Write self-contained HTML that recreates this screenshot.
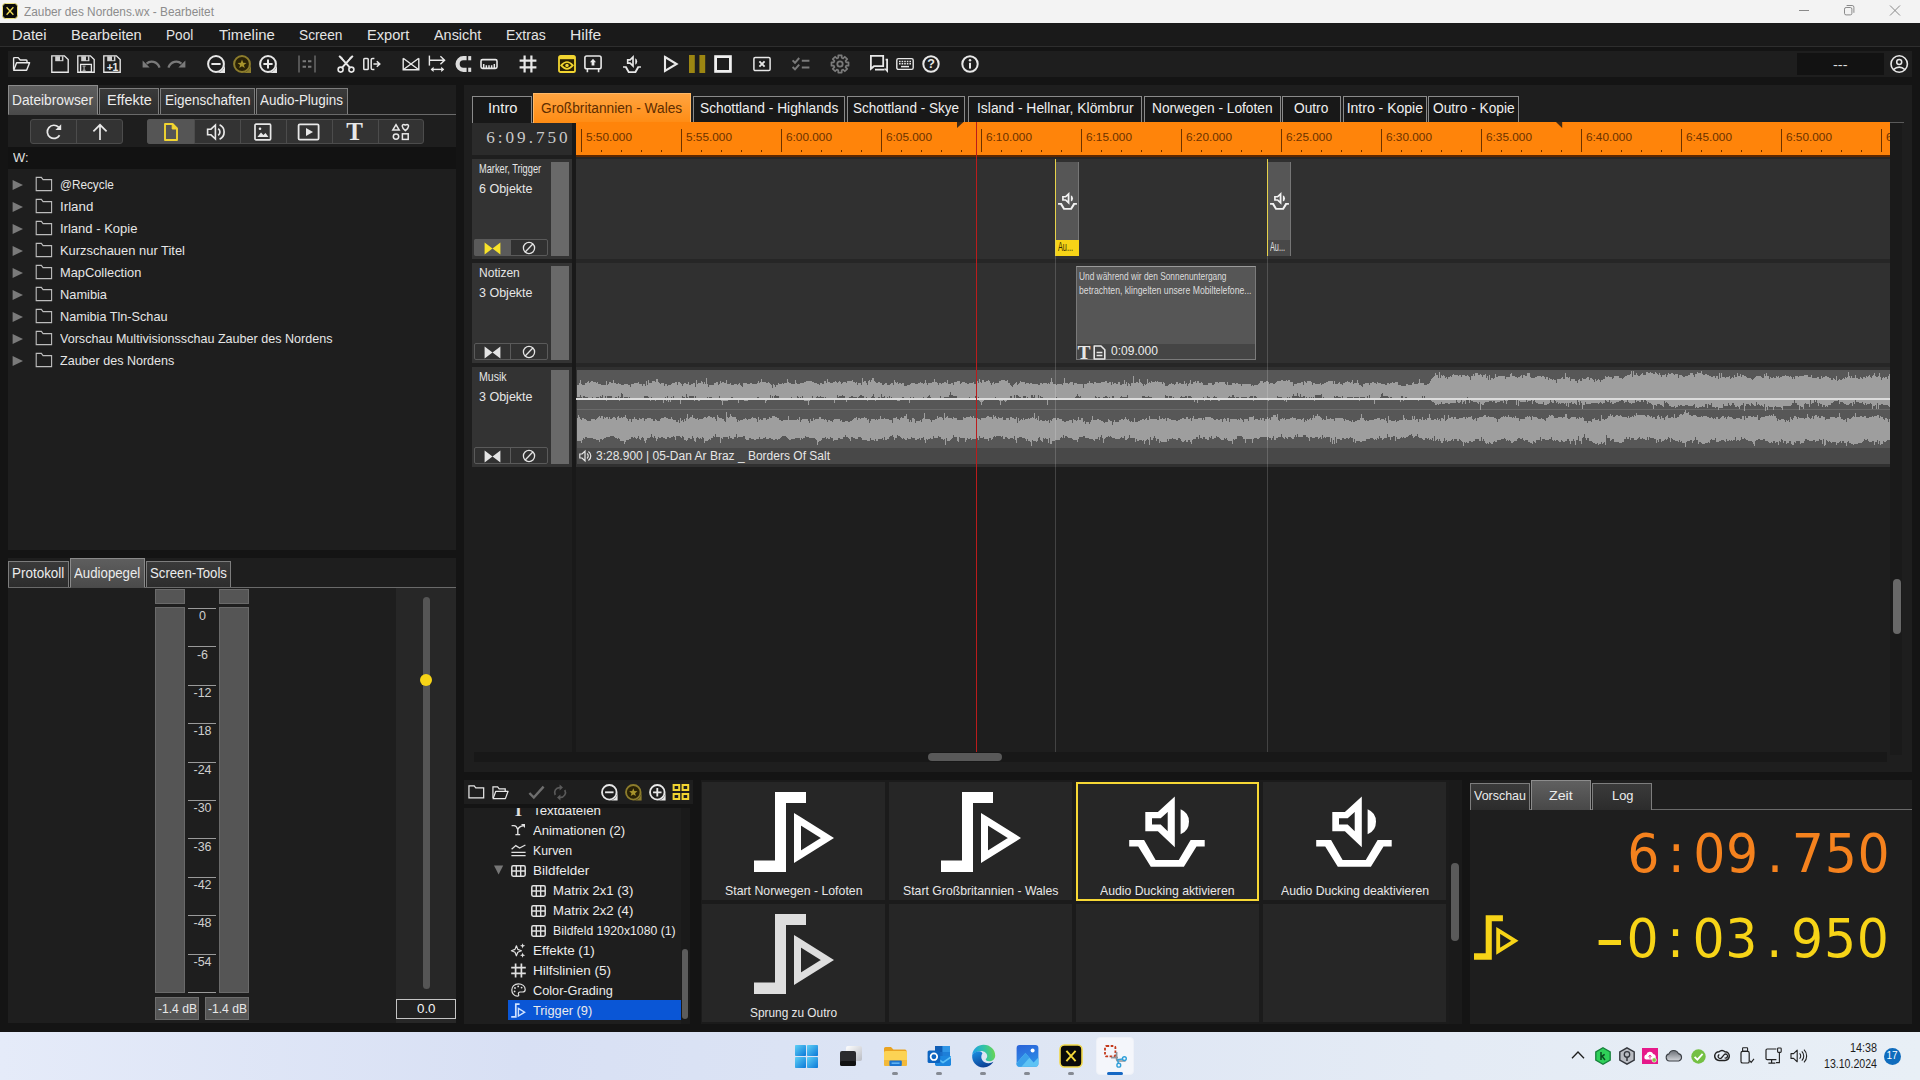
<!DOCTYPE html>
<html lang="de"><head><meta charset="utf-8"><title>Zauber des Nordens.wx - Bearbeitet</title>
<style>
html,body{margin:0;padding:0;}
body{width:1920px;height:1080px;overflow:hidden;background:#141414;font-family:"Liberation Sans",sans-serif;position:relative;}
div,svg{position:absolute;box-sizing:border-box;}
svg{overflow:visible;}
</style></head><body>
<div style="left:0px;top:0px;width:1920px;height:23px;background:#f3f3f3;"></div>
<svg style="left:2px;top:3px" width="16" height="16" viewBox="0 0 16 16"><rect x="0.5" y="0.5" width="15" height="15" rx="3" fill="#0a0a0a" stroke="#eadf7a" stroke-width="1"/><path d="M4.6 4.2 L11.4 11.8 M11.4 4.2 L4.6 11.8" stroke="#f0dc55" stroke-width="1.3" fill="none"/></svg>
<div style="left:24.00px;top:4.14px;font-size:12px;line-height:17px;color:#8c8c8c;white-space:pre;transform:scaleX(0.9856);transform-origin:0 0;">Zauber des Nordens.wx - Bearbeitet</div>
<svg style="left:1790px;top:0" width="130" height="23" viewBox="0 0 130 23"><g stroke="#8a8a8a" stroke-width="1" fill="none"><path d="M9 10.5 H19"/><rect x="54.5" y="7.5" width="7.4" height="7.4" rx="1.6"/><path d="M56.6 5.5 H62.2 Q63.9 5.5 63.9 7.2 V12.8"/><path d="M100 5.5 L110 15.5 M110 5.5 L100 15.5"/></g></svg>
<div style="left:0px;top:23px;width:1920px;height:23px;background:#1a1a1a;"></div>
<div style="left:0px;top:46px;width:1920px;height:1px;background:#2e2e2e;"></div>
<div style="left:12.00px;top:25.15px;font-size:14px;line-height:20px;color:#e4e4e4;white-space:pre;transform:scaleX(1.0556);transform-origin:0 0;">Datei</div>
<div style="left:71.00px;top:25.15px;font-size:14px;line-height:20px;color:#e4e4e4;white-space:pre;transform:scaleX(1.0440);transform-origin:0 0;">Bearbeiten</div>
<div style="left:166.00px;top:25.15px;font-size:14px;line-height:20px;color:#e4e4e4;white-space:pre;transform:scaleX(0.9742);transform-origin:0 0;">Pool</div>
<div style="left:218.50px;top:25.15px;font-size:14px;line-height:20px;color:#e4e4e4;white-space:pre;transform:scaleX(1.0652);transform-origin:0 0;">Timeline</div>
<div style="left:299.00px;top:25.15px;font-size:14px;line-height:20px;color:#e4e4e4;white-space:pre;transform:scaleX(0.9806);transform-origin:0 0;">Screen</div>
<div style="left:367.00px;top:25.15px;font-size:14px;line-height:20px;color:#e4e4e4;white-space:pre;transform:scaleX(1.0454);transform-origin:0 0;">Export</div>
<div style="left:434.00px;top:25.15px;font-size:14px;line-height:20px;color:#e4e4e4;white-space:pre;transform:scaleX(1.0302);transform-origin:0 0;">Ansicht</div>
<div style="left:506.00px;top:25.15px;font-size:14px;line-height:20px;color:#e4e4e4;white-space:pre;">Extras</div>
<div style="left:570.00px;top:25.15px;font-size:14px;line-height:20px;color:#e4e4e4;white-space:pre;transform:scaleX(1.1176);transform-origin:0 0;">Hilfe</div>
<div style="left:8px;top:51px;width:1904px;height:26px;background:#1e1e1e;"></div>
<div style="left:1797px;top:53px;width:87px;height:22px;background:#121212;"></div>
<div style="left:1833.30px;top:55.22px;font-size:13.5px;line-height:19px;color:#e0e0e0;white-space:pre;transform:scaleX(1.0824);transform-origin:0 0;">---</div>
<svg style="left:12px;top:55px" width="18" height="18" viewBox="0 0 18 18"><path d="M1.6 14.6 V3.6 Q1.6 2.6 2.6 2.6 H6.2 L8.2 5 H14.2 Q15 5 15 5.8 V7.4" fill="none" stroke="#e8e8e8" stroke-width="1.4" stroke-linejoin="round"/><path d="M1.7 15.3 L4.6 7.7 H17.6 L14.6 15.3 Z" fill="none" stroke="#e8e8e8" stroke-width="1.4" stroke-linejoin="round"/></svg>
<svg style="left:51px;top:55px" width="18" height="18" viewBox="0 0 18 18"><path d="M0.8 0.8 H13.4 L17.2 4.6 V17.2 H0.8 Z" fill="none" stroke="#e8e8e8" stroke-width="1.35" stroke-linejoin="miter"/><rect x="4.2" y="1.2" width="8.2" height="5" fill="#d0d0d0"/><rect x="9" y="1.6" width="1.9" height="3.6" fill="#1e1e1e"/></svg>
<svg style="left:77px;top:55px" width="18" height="18" viewBox="0 0 18 18"><path d="M0.8 0.8 H13.4 L17.2 4.6 V17.2 H0.8 Z" fill="none" stroke="#e8e8e8" stroke-width="1.35" stroke-linejoin="miter"/><rect x="4.2" y="1.2" width="8.2" height="5" fill="#d0d0d0"/><rect x="9" y="1.6" width="1.9" height="3.6" fill="#1e1e1e"/><rect x="3.6" y="9.4" width="10.8" height="7.6" fill="none" stroke="#e8e8e8" stroke-width="1.3"/><path d="M5.6 11.2 H8.6 M5.6 15.4 H8.6 M7.1 11.2 V15.4" stroke="#9a9a9a" stroke-width="1.3" fill="none"/></svg>
<svg style="left:103px;top:55px" width="18" height="18" viewBox="0 0 18 18"><path d="M0.8 0.8 H13.4 L17.2 4.6 V17.2 H0.8 Z" fill="none" stroke="#e8e8e8" stroke-width="1.35" stroke-linejoin="miter"/><rect x="4.2" y="1.2" width="8.2" height="5" fill="#d0d0d0"/><rect x="9" y="1.6" width="1.9" height="3.6" fill="#1e1e1e"/><text x="9.3" y="15.6" font-family="Liberation Sans,sans-serif" font-weight="bold" font-size="10.5" fill="#e8e8e8" text-anchor="middle" letter-spacing="-0.4">+1</text></svg>
<svg style="left:142px;top:55px" width="18" height="18" viewBox="0 0 18 18"><path d="M17.6 12.6 C15.2 6.2 8.4 5.2 4.6 8.6" fill="none" stroke="#7a7a7a" stroke-width="2.2"/><path d="M0.6 5.6 V12.4 H7.6 Z" fill="#7a7a7a"/></svg>
<svg style="left:168px;top:55px" width="18" height="18" viewBox="0 0 18 18"><g transform="translate(18,0) scale(-1,1)"><path d="M17.6 12.6 C15.2 6.2 8.4 5.2 4.6 8.6" fill="none" stroke="#7a7a7a" stroke-width="2.2"/><path d="M0.6 5.6 V12.4 H7.6 Z" fill="#7a7a7a"/></g></svg>
<svg style="left:207px;top:55px" width="18" height="18" viewBox="0 0 18 18"><path d="M9 18 H18 V9 A9 9 0 0 1 9 18 Z" fill="#e8e8e8"/><circle cx="9" cy="9" r="7.9" fill="#1e1e1e" stroke="#e8e8e8" stroke-width="2"/><path d="M4.4 9 H13.6" stroke="#e8e8e8" stroke-width="2"/></svg>
<svg style="left:233px;top:55px" width="18" height="18" viewBox="0 0 18 18"><path d="M9 18 H18 V9 A9 9 0 0 1 9 18 Z" fill="#8d7d2c"/><circle cx="9" cy="9" r="7.9" fill="#2a2206" stroke="#8d7d2c" stroke-width="2"/><path d="M9 4.6 L10.2 7.7 L13.5 7.9 L10.9 9.9 L11.8 13.1 L9 11.3 L6.2 13.1 L7.1 9.9 L4.5 7.9 L7.8 7.7 Z" fill="#a8942c"/></svg>
<svg style="left:259px;top:55px" width="18" height="18" viewBox="0 0 18 18"><path d="M9 18 H18 V9 A9 9 0 0 1 9 18 Z" fill="#e8e8e8"/><circle cx="9" cy="9" r="7.9" fill="#1e1e1e" stroke="#e8e8e8" stroke-width="2"/><path d="M4.4 9 H13.6 M9 4.4 V13.6" stroke="#e8e8e8" stroke-width="2"/></svg>
<svg style="left:298px;top:55px" width="18" height="18" viewBox="0 0 18 18"><path d="M1 0.5 V17.5 M17 0.5 V17.5" stroke="#7a7a7a" stroke-width="1.2"/><path d="M4.6 6.2 H8 M10 6.2 H13.4 M4.6 11.8 H8 M10 11.8 H13.4" stroke="#7a7a7a" stroke-width="2"/></svg>
<svg style="left:337px;top:55px" width="18" height="18" viewBox="0 0 18 18"><path d="M2.2 0.8 L13.4 13.2 M15.8 0.8 L4.6 13.2" stroke="#e8e8e8" stroke-width="2" fill="none"/><path d="M2 0.6 L5 2 L9 8.6 Z M16 0.6 L13 2 L9 8.6 Z" fill="#e8e8e8"/><circle cx="3.6" cy="14.6" r="2.5" fill="none" stroke="#e8e8e8" stroke-width="1.6"/><circle cx="14.4" cy="14.6" r="2.5" fill="none" stroke="#e8e8e8" stroke-width="1.6"/></svg>
<svg style="left:363px;top:55px" width="18" height="18" viewBox="0 0 18 18"><rect x="0.8" y="3.4" width="4.4" height="11.2" rx="0.8" fill="none" stroke="#e8e8e8" stroke-width="1.5"/><path d="M11.4 3.4 H9.6 Q8.2 3.4 8.2 4.8 V13.2 Q8.2 14.6 9.6 14.6 H11.4" fill="none" stroke="#e8e8e8" stroke-width="1.5"/><path d="M10.4 9 H16.4 M13.8 6.2 L16.8 9 L13.8 11.8" fill="none" stroke="#e8e8e8" stroke-width="1.5"/></svg>
<svg style="left:402px;top:55px" width="18" height="18" viewBox="0 0 18 18"><path d="M1.2 3.2 V14.8 H16.8 V3.2 M1.2 3.2 L16.8 14.8 M16.8 3.2 L1.2 14.8" fill="none" stroke="#e8e8e8" stroke-width="1.4"/></svg>
<svg style="left:428px;top:55px" width="18" height="18" viewBox="0 0 18 18"><path d="M1.4 0.6 V10.6" stroke="#e8e8e8" stroke-width="1.4"/><path d="M1.4 5.2 H16.4 M12.4 1.2 L16.6 5.2 L12.4 9.2" fill="none" stroke="#e8e8e8" stroke-width="1.4"/><path d="M3.4 14.4 H15.4" stroke="#e8e8e8" stroke-width="1.4"/><path d="M5.6 11.8 L2.6 14.4 L5.6 17 Z M13.2 11.8 L16.2 14.4 L13.2 17 Z" fill="#e8e8e8"/></svg>
<svg style="left:454px;top:55px" width="18" height="18" viewBox="0 0 18 18"><path d="M12.6 3.2 H9.4 A5.8 5.8 0 0 0 9.4 14.8 H12.6" fill="none" stroke="#dcdcdc" stroke-width="4.2"/><rect x="14.2" y="1.1" width="3" height="4.2" fill="#dcdcdc"/><rect x="14.2" y="12.7" width="3" height="4.2" fill="#dcdcdc"/></svg>
<svg style="left:480px;top:55px" width="18" height="18" viewBox="0 0 18 18"><rect x="1" y="4.6" width="16" height="8.8" rx="1.6" fill="none" stroke="#e8e8e8" stroke-width="1.6"/><path d="M3.7 13 V9 M6.35 13 V10.2 M9 13 V10.2 M11.65 13 V10.2 M14.3 13 V9" stroke="#e8e8e8" stroke-width="1.5"/></svg>
<svg style="left:519px;top:55px" width="18" height="18" viewBox="0 0 18 18"><path d="M5.6 0.6 V17.4 M12.4 0.6 V17.4 M0.6 5.6 H17.4 M0.6 12.4 H17.4" stroke="#e8e8e8" stroke-width="2.2"/></svg>
<svg style="left:558px;top:55px" width="18" height="18" viewBox="0 0 18 18"><rect x="1" y="1" width="16" height="16" rx="1.6" fill="#2a2004" stroke="#f2d531" stroke-width="1.8"/><rect x="1" y="1" width="16" height="3.2" fill="#f2d531"/><path d="M3.2 10.4 Q9 3.6 14.8 10.4 Q9 17.2 3.2 10.4 Z" fill="none" stroke="#f2d531" stroke-width="1.7"/><circle cx="9" cy="10.4" r="1.7" fill="#f2d531"/></svg>
<svg style="left:584px;top:55px" width="18" height="18" viewBox="0 0 18 18"><rect x="0.9" y="1" width="16.2" height="12.8" rx="1.8" fill="none" stroke="#e8e8e8" stroke-width="1.6"/><path d="M3.4 13.8 V17.2 M14.6 13.8 V17.2" stroke="#e8e8e8" stroke-width="1.6"/><path d="M9 3.8 L12 7.2 H10.4 V10.4 H7.6 V7.2 H6 Z" fill="#e8e8e8"/></svg>
<svg style="left:623px;top:55px" width="18" height="18" viewBox="0 0 18 18"><g transform="scale(0.2368,0.2535)"><path fill-rule="evenodd" d="M16.3 16 H28.9 L45.8 0.4 V51.3 L28.9 35.3 H16.3 Z M23 22.3 H31.7 L38.7 16 V35.3 L31.7 28.6 H23 Z" fill="#e8e8e8"/><path d="M51.6 13.15 A13.5 13.5 0 0 1 51.6 38.15 Z" fill="#e8e8e8"/><path d="M0.2 44 H15.1 L26.6 64 H49.8 L61.6 44 H75.7 V50.6 H67.5 L54.9 70.7 H21.8 L9.2 50.6 H0.2 Z" fill="#e8e8e8"/></g></svg>
<svg style="left:661px;top:55px" width="18" height="18" viewBox="0 0 18 18"><path d="M4 2 L15.6 9 L4 16 Z" fill="none" stroke="#e8e8e8" stroke-width="2.1"/></svg>
<svg style="left:688px;top:55px" width="18" height="18" viewBox="0 0 18 18"><rect x="1" y="0" width="5.8" height="18" fill="#9c8612"/><rect x="11.4" y="0" width="5.8" height="18" fill="#9c8612"/></svg>
<svg style="left:714px;top:55px" width="18" height="18" viewBox="0 0 18 18"><rect x="1.6" y="1.6" width="14.8" height="14.8" fill="none" stroke="#f0f0f0" stroke-width="2.8"/></svg>
<svg style="left:753px;top:55px" width="18" height="18" viewBox="0 0 18 18"><rect x="0.9" y="2.4" width="16.2" height="13.2" rx="1.4" fill="none" stroke="#e8e8e8" stroke-width="1.5"/><path d="M6.4 6.4 L11.6 11.6 M11.6 6.4 L6.4 11.6" stroke="#e8e8e8" stroke-width="1.9"/></svg>
<svg style="left:792px;top:55px" width="18" height="18" viewBox="0 0 18 18"><path d="M0.6 5.4 L3 7.8 L7.2 3 M0.6 12 L3 14.4 L7.2 9.6" fill="none" stroke="#7a7a7a" stroke-width="2"/><path d="M9.8 5.8 H17.4 M9.8 12.4 H17.4" stroke="#7a7a7a" stroke-width="2"/></svg>
<svg style="left:831px;top:55px" width="18" height="18" viewBox="0 0 18 18"><path d="M7.27 0.47 L10.73 0.47 L10.71 2.83 L12.15 3.43 L13.81 1.75 L16.25 4.19 L14.57 5.85 L15.17 7.29 L17.53 7.27 L17.53 10.73 L15.17 10.71 L14.57 12.15 L16.25 13.81 L13.81 16.25 L12.15 14.57 L10.71 15.17 L10.73 17.53 L7.27 17.53 L7.29 15.17 L5.85 14.57 L4.19 16.25 L1.75 13.81 L3.43 12.15 L2.83 10.71 L0.47 10.73 L0.47 7.27 L2.83 7.29 L3.43 5.85 L1.75 4.19 L4.19 1.75 L5.85 3.43 L7.29 2.83 Z" fill="none" stroke="#7a7a7a" stroke-width="1.7" stroke-linejoin="round"/><circle cx="9" cy="9" r="2.7" fill="none" stroke="#7a7a7a" stroke-width="1.8"/></svg>
<svg style="left:870px;top:55px" width="18" height="18" viewBox="0 0 18 18"><path d="M0.9 0.9 H13.2 V11.2 H4 L0.9 13.8 Z" fill="none" stroke="#e8e8e8" stroke-width="1.8" stroke-linejoin="miter"/><path d="M15.6 4.6 H17.1 V13.6 M5 14.6 H14.6" fill="none" stroke="#e8e8e8" stroke-width="1.8"/><path d="M14 13.8 L18 18 V13 Z" fill="#e8e8e8"/></svg>
<svg style="left:896px;top:55px" width="18" height="18" viewBox="0 0 18 18"><rect x="0.8" y="3.6" width="16.4" height="10.8" rx="1.6" fill="none" stroke="#e8e8e8" stroke-width="1.4"/><path d="M3 6.4 H15 M3 8.8 H15" stroke="#e8e8e8" stroke-width="1.5" stroke-dasharray="1.6 1"/><path d="M5 11.6 H13" stroke="#e8e8e8" stroke-width="1.5"/></svg>
<svg style="left:922px;top:55px" width="18" height="18" viewBox="0 0 18 18"><circle cx="9" cy="9" r="7.7" fill="none" stroke="#e8e8e8" stroke-width="2"/><text x="9" y="13.4" font-family="Liberation Sans,sans-serif" font-weight="bold" font-size="12.5" fill="#e8e8e8" text-anchor="middle">?</text></svg>
<svg style="left:961px;top:55px" width="18" height="18" viewBox="0 0 18 18"><circle cx="9" cy="9" r="7.7" fill="none" stroke="#e8e8e8" stroke-width="2"/><rect x="8" y="7.8" width="2" height="5.8" fill="#e8e8e8"/><circle cx="9" cy="5.2" r="1.25" fill="#e8e8e8"/></svg>
<svg style="left:1890px;top:55px" width="18" height="18" viewBox="0 0 18 18"><circle cx="9.2" cy="9" r="8.2" fill="none" stroke="#e8e8e8" stroke-width="1.6"/><circle cx="9.2" cy="6.9" r="2.5" fill="none" stroke="#e8e8e8" stroke-width="1.5"/><path d="M3.4 14.6 Q9.2 9.6 15 14.6" fill="none" stroke="#e8e8e8" stroke-width="1.5"/></svg>
<div style="left:8px;top:85px;width:448px;height:465px;background:#1e1e1e;"></div>
<div style="left:8px;top:85px;width:90px;height:30px;background:linear-gradient(#5e5e5e,#4a4a4a);border:1px solid #8a8a8a;border-bottom:none;"></div>
<div style="left:12.30px;top:90.15px;font-size:14px;line-height:20px;color:#ececec;white-space:pre;transform:scaleX(0.9821);transform-origin:0 0;">Dateibrowser</div>
<div style="left:99px;top:88px;width:60px;height:27px;background:linear-gradient(#3a3a3a,#2c2c2c);border:1px solid #7d7d7d;border-bottom:none;"></div>
<div style="left:106.50px;top:90.15px;font-size:14px;line-height:20px;color:#ececec;white-space:pre;transform:scaleX(1.0340);transform-origin:0 0;">Effekte</div>
<div style="left:160px;top:88px;width:95px;height:27px;background:linear-gradient(#3a3a3a,#2c2c2c);border:1px solid #7d7d7d;border-bottom:none;"></div>
<div style="left:164.70px;top:90.15px;font-size:14px;line-height:20px;color:#ececec;white-space:pre;transform:scaleX(0.9647);transform-origin:0 0;">Eigenschaften</div>
<div style="left:256px;top:88px;width:92px;height:27px;background:linear-gradient(#3a3a3a,#2c2c2c);border:1px solid #7d7d7d;border-bottom:none;"></div>
<div style="left:260.30px;top:90.15px;font-size:14px;line-height:20px;color:#ececec;white-space:pre;transform:scaleX(0.9608);transform-origin:0 0;">Audio-Plugins</div>
<div style="left:8px;top:114px;width:448px;height:1px;background:#6a6a6a;"></div>
<div style="left:9px;top:114px;width:88px;height:1px;background:#4a4a4a;"></div>
<div style="left:30px;top:119px;width:93px;height:25px;background:#333333;border:1px solid #4c4c4c;border-radius:3px;"></div>
<div style="left:76px;top:120px;width:1px;height:23px;background:#4c4c4c;"></div>
<div style="left:147px;top:119px;width:277px;height:25px;background:#333333;border:1px solid #4c4c4c;border-radius:3px;"></div>
<div style="left:147px;top:119px;width:47px;height:25px;background:#555555;border-radius:3px 0 0 3px;"></div>
<div style="left:193.5px;top:120px;width:1px;height:23px;background:#4c4c4c;"></div>
<div style="left:239.5px;top:120px;width:1px;height:23px;background:#4c4c4c;"></div>
<div style="left:285.5px;top:120px;width:1px;height:23px;background:#4c4c4c;"></div>
<div style="left:331.5px;top:120px;width:1px;height:23px;background:#4c4c4c;"></div>
<div style="left:377.5px;top:120px;width:1px;height:23px;background:#4c4c4c;"></div>
<svg style="left:44px;top:122px" width="20" height="20" viewBox="0 0 20 20"><path d="M15.6 13.2 A6.6 6.6 0 1 1 14.6 5.2" fill="none" stroke="#e8e8e8" stroke-width="1.7"/><path d="M17.2 2.2 V8 H11.4 Z" fill="#e8e8e8"/></svg>
<svg style="left:90px;top:122px" width="20" height="20" viewBox="0 0 20 20"><path d="M10 18 V3.4 M3.4 9.4 L10 2.8 L16.6 9.4" fill="none" stroke="#e8e8e8" stroke-width="1.7"/></svg>
<svg style="left:162px;top:122px" width="18" height="20" viewBox="0 0 18 20"><path d="M3 2 H10.6 L15 6.4 V18 H3 Z" fill="none" stroke="#f2d531" stroke-width="1.9" stroke-linejoin="round"/><path d="M10.2 2 V7 H15" fill="#f2d531" stroke="#f2d531" stroke-width="1"/></svg>
<svg style="left:206px;top:122px" width="20" height="20" viewBox="0 0 20 20"><path d="M1.6 7.2 H5 L9.4 3 V17 L5 12.8 H1.6 Z" fill="none" stroke="#e8e8e8" stroke-width="1.6" stroke-linejoin="miter"/><path d="M12.2 6.6 A4.2 4.2 0 0 1 12.2 13.4" fill="none" stroke="#e8e8e8" stroke-width="1.7"/><path d="M13.6 2.8 A8 8 0 0 1 13.6 17.2" fill="none" stroke="#e8e8e8" stroke-width="1.7"/></svg>
<svg style="left:253px;top:122px" width="20" height="20" viewBox="0 0 20 20"><rect x="2" y="2.2" width="15.6" height="15.6" rx="1" fill="none" stroke="#e8e8e8" stroke-width="1.7"/><path d="M4.4 15 L8 10.6 L10.4 13 L12.6 11 L15.4 15 Z" fill="#e8e8e8"/><circle cx="7" cy="6.8" r="1.3" fill="#e8e8e8"/></svg>
<svg style="left:297px;top:122px" width="24" height="20" viewBox="0 0 24 20"><rect x="1.6" y="2.4" width="20" height="15.2" rx="1.2" fill="none" stroke="#e8e8e8" stroke-width="1.8"/><path d="M9 6 L16 10 L9 14 Z" fill="#e8e8e8"/></svg>
<div style="left:346.36px;top:114.06px;font-size:25px;line-height:35px;color:#e8e8e8;white-space:pre;font-family:'Liberation Serif',serif;font-weight:bold;">T</div>
<svg style="left:391px;top:122px" width="20" height="20" viewBox="0 0 20 20"><path d="M5 2.6 L8.2 8 H1.8 Z" fill="none" stroke="#e8e8e8" stroke-width="1.5" stroke-linejoin="miter"/><path d="M14.4 8.6 C10 5.4 11 2.4 12.8 2.4 C13.8 2.4 14.4 3.4 14.4 3.8 C14.4 3.4 15 2.4 16 2.4 C17.8 2.4 18.8 5.4 14.4 8.6 Z" fill="none" stroke="#e8e8e8" stroke-width="1.5"/><circle cx="5" cy="14.6" r="2.7" fill="none" stroke="#e8e8e8" stroke-width="1.5"/><rect x="11.4" y="11.8" width="5.8" height="5.6" fill="none" stroke="#e8e8e8" stroke-width="1.5"/></svg>
<div style="left:8px;top:147px;width:448px;height:22px;background:#121212;"></div>
<div style="left:13.00px;top:147.82px;font-size:13.5px;line-height:19px;color:#e0e0e0;white-space:pre;transform:scaleX(0.9539);transform-origin:0 0;">W:</div>
<svg style="left:12px;top:178.5px" width="12" height="12" viewBox="0 0 12 12"><path d="M0.6 1 L11 6 L0.6 11 Z" fill="#7a7a7a"/></svg>
<svg style="left:35px;top:175.8px" width="18" height="16" viewBox="0 0 18 16"><path d="M1.2 14.6 V1.4 H6.4 L8 3.6 H16.6 V14.6 Z" fill="none" stroke="#bdbdbd" stroke-width="1.1"/></svg>
<div style="left:60.00px;top:174.62px;font-size:13.5px;line-height:19px;color:#e6e6e6;white-space:pre;transform:scaleX(0.8717);transform-origin:0 0;">@Recycle</div>
<svg style="left:12px;top:200.5px" width="12" height="12" viewBox="0 0 12 12"><path d="M0.6 1 L11 6 L0.6 11 Z" fill="#7a7a7a"/></svg>
<svg style="left:35px;top:197.8px" width="18" height="16" viewBox="0 0 18 16"><path d="M1.2 14.6 V1.4 H6.4 L8 3.6 H16.6 V14.6 Z" fill="none" stroke="#bdbdbd" stroke-width="1.1"/></svg>
<div style="left:60.00px;top:196.62px;font-size:13.5px;line-height:19px;color:#e6e6e6;white-space:pre;transform:scaleX(0.9861);transform-origin:0 0;">Irland</div>
<svg style="left:12px;top:222.5px" width="12" height="12" viewBox="0 0 12 12"><path d="M0.6 1 L11 6 L0.6 11 Z" fill="#7a7a7a"/></svg>
<svg style="left:35px;top:219.8px" width="18" height="16" viewBox="0 0 18 16"><path d="M1.2 14.6 V1.4 H6.4 L8 3.6 H16.6 V14.6 Z" fill="none" stroke="#bdbdbd" stroke-width="1.1"/></svg>
<div style="left:60.00px;top:218.62px;font-size:13.5px;line-height:19px;color:#e6e6e6;white-space:pre;transform:scaleX(0.9652);transform-origin:0 0;">Irland - Kopie</div>
<svg style="left:12px;top:244.5px" width="12" height="12" viewBox="0 0 12 12"><path d="M0.6 1 L11 6 L0.6 11 Z" fill="#7a7a7a"/></svg>
<svg style="left:35px;top:241.8px" width="18" height="16" viewBox="0 0 18 16"><path d="M1.2 14.6 V1.4 H6.4 L8 3.6 H16.6 V14.6 Z" fill="none" stroke="#bdbdbd" stroke-width="1.1"/></svg>
<div style="left:60.00px;top:240.62px;font-size:13.5px;line-height:19px;color:#e6e6e6;white-space:pre;transform:scaleX(0.9573);transform-origin:0 0;">Kurzschauen nur Titel</div>
<svg style="left:12px;top:266.5px" width="12" height="12" viewBox="0 0 12 12"><path d="M0.6 1 L11 6 L0.6 11 Z" fill="#7a7a7a"/></svg>
<svg style="left:35px;top:263.8px" width="18" height="16" viewBox="0 0 18 16"><path d="M1.2 14.6 V1.4 H6.4 L8 3.6 H16.6 V14.6 Z" fill="none" stroke="#bdbdbd" stroke-width="1.1"/></svg>
<div style="left:60.00px;top:262.62px;font-size:13.5px;line-height:19px;color:#e6e6e6;white-space:pre;transform:scaleX(0.9504);transform-origin:0 0;">MapCollection</div>
<svg style="left:12px;top:288.5px" width="12" height="12" viewBox="0 0 12 12"><path d="M0.6 1 L11 6 L0.6 11 Z" fill="#7a7a7a"/></svg>
<svg style="left:35px;top:285.8px" width="18" height="16" viewBox="0 0 18 16"><path d="M1.2 14.6 V1.4 H6.4 L8 3.6 H16.6 V14.6 Z" fill="none" stroke="#bdbdbd" stroke-width="1.1"/></svg>
<div style="left:60.00px;top:284.62px;font-size:13.5px;line-height:19px;color:#e6e6e6;white-space:pre;transform:scaleX(0.9491);transform-origin:0 0;">Namibia</div>
<svg style="left:12px;top:310.5px" width="12" height="12" viewBox="0 0 12 12"><path d="M0.6 1 L11 6 L0.6 11 Z" fill="#7a7a7a"/></svg>
<svg style="left:35px;top:307.8px" width="18" height="16" viewBox="0 0 18 16"><path d="M1.2 14.6 V1.4 H6.4 L8 3.6 H16.6 V14.6 Z" fill="none" stroke="#bdbdbd" stroke-width="1.1"/></svg>
<div style="left:60.00px;top:306.62px;font-size:13.5px;line-height:19px;color:#e6e6e6;white-space:pre;transform:scaleX(0.9384);transform-origin:0 0;">Namibia Tln-Schau</div>
<svg style="left:12px;top:332.5px" width="12" height="12" viewBox="0 0 12 12"><path d="M0.6 1 L11 6 L0.6 11 Z" fill="#7a7a7a"/></svg>
<svg style="left:35px;top:329.8px" width="18" height="16" viewBox="0 0 18 16"><path d="M1.2 14.6 V1.4 H6.4 L8 3.6 H16.6 V14.6 Z" fill="none" stroke="#bdbdbd" stroke-width="1.1"/></svg>
<div style="left:60.00px;top:328.62px;font-size:13.5px;line-height:19px;color:#e6e6e6;white-space:pre;transform:scaleX(0.9311);transform-origin:0 0;">Vorschau Multivisionsschau Zauber des Nordens</div>
<svg style="left:12px;top:354.5px" width="12" height="12" viewBox="0 0 12 12"><path d="M0.6 1 L11 6 L0.6 11 Z" fill="#7a7a7a"/></svg>
<svg style="left:35px;top:351.8px" width="18" height="16" viewBox="0 0 18 16"><path d="M1.2 14.6 V1.4 H6.4 L8 3.6 H16.6 V14.6 Z" fill="none" stroke="#bdbdbd" stroke-width="1.1"/></svg>
<div style="left:60.00px;top:350.62px;font-size:13.5px;line-height:19px;color:#e6e6e6;white-space:pre;transform:scaleX(0.9287);transform-origin:0 0;">Zauber des Nordens</div>
<div style="left:8px;top:558px;width:448px;height:465px;background:#1e1e1e;"></div>
<div style="left:8px;top:561px;width:61px;height:27px;background:linear-gradient(#3a3a3a,#2c2c2c);border:1px solid #7d7d7d;border-bottom:none;"></div>
<div style="left:12.40px;top:562.85px;font-size:14px;line-height:20px;color:#ececec;white-space:pre;transform:scaleX(0.9601);transform-origin:0 0;">Protokoll</div>
<div style="left:70px;top:558px;width:75px;height:30px;background:linear-gradient(#5e5e5e,#4a4a4a);border:1px solid #8a8a8a;border-bottom:none;"></div>
<div style="left:74.30px;top:562.85px;font-size:14px;line-height:20px;color:#ececec;white-space:pre;transform:scaleX(0.9463);transform-origin:0 0;">Audiopegel</div>
<div style="left:146px;top:561px;width:85px;height:27px;background:linear-gradient(#3a3a3a,#2c2c2c);border:1px solid #7d7d7d;border-bottom:none;"></div>
<div style="left:149.80px;top:562.85px;font-size:14px;line-height:20px;color:#ececec;white-space:pre;transform:scaleX(0.9412);transform-origin:0 0;">Screen-Tools</div>
<div style="left:8px;top:587px;width:448px;height:1px;background:#6a6a6a;"></div>
<div style="left:71px;top:587px;width:73px;height:1px;background:#4a4a4a;"></div>
<div style="left:155px;top:589px;width:30px;height:15px;background:#555555;border:1px solid #6a6a6a;"></div>
<div style="left:155px;top:607px;width:30px;height:386px;background:#555555;border:1px solid #6a6a6a;"></div>
<div style="left:219px;top:589px;width:30px;height:15px;background:#555555;border:1px solid #6a6a6a;"></div>
<div style="left:219px;top:607px;width:30px;height:386px;background:#555555;border:1px solid #6a6a6a;"></div>
<div style="left:188px;top:608px;width:28px;height:1px;background:#9a9a9a;"></div>
<div style="left:199.02px;top:607.27px;font-size:12.5px;line-height:18px;color:#cfcfcf;white-space:pre;">0</div>
<div style="left:188px;top:646px;width:28px;height:1px;background:#9a9a9a;"></div>
<div style="left:196.94px;top:645.67px;font-size:12.5px;line-height:18px;color:#cfcfcf;white-space:pre;">-6</div>
<div style="left:188px;top:685px;width:28px;height:1px;background:#9a9a9a;"></div>
<div style="left:193.47px;top:684.07px;font-size:12.5px;line-height:18px;color:#cfcfcf;white-space:pre;">-12</div>
<div style="left:188px;top:723px;width:28px;height:1px;background:#9a9a9a;"></div>
<div style="left:193.47px;top:722.47px;font-size:12.5px;line-height:18px;color:#cfcfcf;white-space:pre;">-18</div>
<div style="left:188px;top:762px;width:28px;height:1px;background:#9a9a9a;"></div>
<div style="left:193.47px;top:760.87px;font-size:12.5px;line-height:18px;color:#cfcfcf;white-space:pre;">-24</div>
<div style="left:188px;top:800px;width:28px;height:1px;background:#9a9a9a;"></div>
<div style="left:193.47px;top:799.27px;font-size:12.5px;line-height:18px;color:#cfcfcf;white-space:pre;">-30</div>
<div style="left:188px;top:838px;width:28px;height:1px;background:#9a9a9a;"></div>
<div style="left:193.47px;top:837.67px;font-size:12.5px;line-height:18px;color:#cfcfcf;white-space:pre;">-36</div>
<div style="left:188px;top:877px;width:28px;height:1px;background:#9a9a9a;"></div>
<div style="left:193.47px;top:876.07px;font-size:12.5px;line-height:18px;color:#cfcfcf;white-space:pre;">-42</div>
<div style="left:188px;top:915px;width:28px;height:1px;background:#9a9a9a;"></div>
<div style="left:193.47px;top:914.47px;font-size:12.5px;line-height:18px;color:#cfcfcf;white-space:pre;">-48</div>
<div style="left:188px;top:954px;width:28px;height:1px;background:#9a9a9a;"></div>
<div style="left:193.47px;top:952.87px;font-size:12.5px;line-height:18px;color:#cfcfcf;white-space:pre;">-54</div>
<div style="left:188px;top:992px;width:28px;height:1px;background:#9a9a9a;"></div>
<div style="left:155px;top:997px;width:44px;height:23px;background:#555555;border:1px solid #6e6e6e;"></div>
<div style="left:205px;top:997px;width:44px;height:23px;background:#555555;border:1px solid #6e6e6e;"></div>
<div style="left:157.50px;top:1000.17px;font-size:12.5px;line-height:18px;color:#e8e8e8;white-space:pre;transform:scaleX(0.9677);transform-origin:0 0;">-1.4 dB</div>
<div style="left:207.50px;top:1000.17px;font-size:12.5px;line-height:18px;color:#e8e8e8;white-space:pre;transform:scaleX(0.9677);transform-origin:0 0;">-1.4 dB</div>
<div style="left:396px;top:588px;width:60px;height:435px;background:#272727;"></div>
<div style="left:423px;top:597px;width:7px;height:392px;background:#555555;border-radius:3.5px;"></div>
<div style="left:420px;top:674px;width:12px;height:12px;background:#f7d417;border-radius:6px;"></div>
<div style="left:396px;top:999px;width:60px;height:20px;background:#212121;border:1px solid #c4c4c4;"></div>
<div style="left:416.75px;top:1000.47px;font-size:12.5px;line-height:18px;color:#f4f4f4;white-space:pre;transform:scaleX(1.0646);transform-origin:0 0;">0.0</div>
<div style="left:464px;top:85px;width:1448px;height:687px;background:#1e1e1e;"></div>
<div style="left:472px;top:122px;width:1432px;height:1px;background:#5a5a5a;"></div>
<div style="left:472px;top:96px;width:60px;height:27px;background:#181818;border:1px solid #8a8a8a;border-bottom:none;"></div>
<div style="left:487.50px;top:97.65px;font-size:14px;line-height:20px;color:#f0f0f0;white-space:pre;transform:scaleX(1.0530);transform-origin:0 0;">Intro</div>
<div style="left:533px;top:93px;width:158px;height:30px;background:linear-gradient(#ffa440,#ff8c14);border:1px solid #ffb866;border-bottom:none;"></div>
<div style="left:541.30px;top:97.65px;font-size:14px;line-height:20px;color:#5e2d00;white-space:pre;transform:scaleX(0.9792);transform-origin:0 0;">Großbritannien - Wales</div>
<div style="left:693px;top:96px;width:152px;height:27px;background:#181818;border:1px solid #8a8a8a;border-bottom:none;"></div>
<div style="left:700.00px;top:97.65px;font-size:14px;line-height:20px;color:#f0f0f0;white-space:pre;transform:scaleX(0.9818);transform-origin:0 0;">Schottland - Highlands</div>
<div style="left:847px;top:96px;width:118px;height:27px;background:#181818;border:1px solid #8a8a8a;border-bottom:none;"></div>
<div style="left:853.30px;top:97.65px;font-size:14px;line-height:20px;color:#f0f0f0;white-space:pre;transform:scaleX(0.9660);transform-origin:0 0;">Schottland - Skye</div>
<div style="left:968px;top:96px;width:174px;height:27px;background:#181818;border:1px solid #8a8a8a;border-bottom:none;"></div>
<div style="left:976.70px;top:97.65px;font-size:14px;line-height:20px;color:#f0f0f0;white-space:pre;transform:scaleX(0.9914);transform-origin:0 0;">Island - Hellnar, Klömbrur</div>
<div style="left:1144px;top:96px;width:137px;height:27px;background:#181818;border:1px solid #8a8a8a;border-bottom:none;"></div>
<div style="left:1151.70px;top:97.65px;font-size:14px;line-height:20px;color:#f0f0f0;white-space:pre;transform:scaleX(0.9807);transform-origin:0 0;">Norwegen - Lofoten</div>
<div style="left:1282px;top:96px;width:59px;height:27px;background:#181818;border:1px solid #8a8a8a;border-bottom:none;"></div>
<div style="left:1294.00px;top:97.65px;font-size:14px;line-height:20px;color:#f0f0f0;white-space:pre;transform:scaleX(0.9796);transform-origin:0 0;">Outro</div>
<div style="left:1343px;top:96px;width:84px;height:27px;background:#181818;border:1px solid #8a8a8a;border-bottom:none;"></div>
<div style="left:1346.70px;top:97.65px;font-size:14px;line-height:20px;color:#f0f0f0;white-space:pre;">Intro - Kopie</div>
<div style="left:1428px;top:96px;width:91px;height:27px;background:#181818;border:1px solid #8a8a8a;border-bottom:none;"></div>
<div style="left:1432.70px;top:97.65px;font-size:14px;line-height:20px;color:#f0f0f0;white-space:pre;transform:scaleX(0.9800);transform-origin:0 0;">Outro - Kopie</div>
<div style="left:472px;top:123px;width:100px;height:32px;background:#2b2b2b;"></div>
<div style="left:486.30px;top:125.89px;font-size:17.2px;line-height:24px;color:#c9c9c9;white-space:pre;font-family:'Liberation Serif',serif;letter-spacing:2.946px;">6:09.750</div>
<div style="left:572px;top:123px;width:4px;height:632px;background:#191919;"></div>
<div style="left:576px;top:122px;width:1314px;height:33px;background:#ff840a;"></div>
<svg style="left:576px;top:123px" width="1314" height="32" viewBox="0 0 1314 32"><rect x="5" y="6" width="1" height="23" fill="#6b3200"/><rect x="25" y="27" width="1" height="2" fill="#6b3200"/><rect x="45" y="27" width="1" height="2" fill="#6b3200"/><rect x="65" y="27" width="1" height="2" fill="#6b3200"/><rect x="85" y="27" width="1" height="2" fill="#6b3200"/><rect x="105" y="6" width="1" height="23" fill="#6b3200"/><rect x="125" y="27" width="1" height="2" fill="#6b3200"/><rect x="145" y="27" width="1" height="2" fill="#6b3200"/><rect x="165" y="27" width="1" height="2" fill="#6b3200"/><rect x="185" y="27" width="1" height="2" fill="#6b3200"/><rect x="205" y="6" width="1" height="23" fill="#6b3200"/><rect x="225" y="27" width="1" height="2" fill="#6b3200"/><rect x="245" y="27" width="1" height="2" fill="#6b3200"/><rect x="265" y="27" width="1" height="2" fill="#6b3200"/><rect x="285" y="27" width="1" height="2" fill="#6b3200"/><rect x="305" y="6" width="1" height="23" fill="#6b3200"/><rect x="325" y="27" width="1" height="2" fill="#6b3200"/><rect x="345" y="27" width="1" height="2" fill="#6b3200"/><rect x="365" y="27" width="1" height="2" fill="#6b3200"/><rect x="385" y="27" width="1" height="2" fill="#6b3200"/><rect x="405" y="6" width="1" height="23" fill="#6b3200"/><rect x="425" y="27" width="1" height="2" fill="#6b3200"/><rect x="445" y="27" width="1" height="2" fill="#6b3200"/><rect x="465" y="27" width="1" height="2" fill="#6b3200"/><rect x="485" y="27" width="1" height="2" fill="#6b3200"/><rect x="505" y="6" width="1" height="23" fill="#6b3200"/><rect x="525" y="27" width="1" height="2" fill="#6b3200"/><rect x="545" y="27" width="1" height="2" fill="#6b3200"/><rect x="565" y="27" width="1" height="2" fill="#6b3200"/><rect x="585" y="27" width="1" height="2" fill="#6b3200"/><rect x="605" y="6" width="1" height="23" fill="#6b3200"/><rect x="625" y="27" width="1" height="2" fill="#6b3200"/><rect x="645" y="27" width="1" height="2" fill="#6b3200"/><rect x="665" y="27" width="1" height="2" fill="#6b3200"/><rect x="685" y="27" width="1" height="2" fill="#6b3200"/><rect x="705" y="6" width="1" height="23" fill="#6b3200"/><rect x="725" y="27" width="1" height="2" fill="#6b3200"/><rect x="745" y="27" width="1" height="2" fill="#6b3200"/><rect x="765" y="27" width="1" height="2" fill="#6b3200"/><rect x="785" y="27" width="1" height="2" fill="#6b3200"/><rect x="805" y="6" width="1" height="23" fill="#6b3200"/><rect x="825" y="27" width="1" height="2" fill="#6b3200"/><rect x="845" y="27" width="1" height="2" fill="#6b3200"/><rect x="865" y="27" width="1" height="2" fill="#6b3200"/><rect x="885" y="27" width="1" height="2" fill="#6b3200"/><rect x="905" y="6" width="1" height="23" fill="#6b3200"/><rect x="925" y="27" width="1" height="2" fill="#6b3200"/><rect x="945" y="27" width="1" height="2" fill="#6b3200"/><rect x="965" y="27" width="1" height="2" fill="#6b3200"/><rect x="985" y="27" width="1" height="2" fill="#6b3200"/><rect x="1005" y="6" width="1" height="23" fill="#6b3200"/><rect x="1025" y="27" width="1" height="2" fill="#6b3200"/><rect x="1045" y="27" width="1" height="2" fill="#6b3200"/><rect x="1065" y="27" width="1" height="2" fill="#6b3200"/><rect x="1085" y="27" width="1" height="2" fill="#6b3200"/><rect x="1105" y="6" width="1" height="23" fill="#6b3200"/><rect x="1125" y="27" width="1" height="2" fill="#6b3200"/><rect x="1145" y="27" width="1" height="2" fill="#6b3200"/><rect x="1165" y="27" width="1" height="2" fill="#6b3200"/><rect x="1185" y="27" width="1" height="2" fill="#6b3200"/><rect x="1205" y="6" width="1" height="23" fill="#6b3200"/><rect x="1225" y="27" width="1" height="2" fill="#6b3200"/><rect x="1245" y="27" width="1" height="2" fill="#6b3200"/><rect x="1265" y="27" width="1" height="2" fill="#6b3200"/><rect x="1285" y="27" width="1" height="2" fill="#6b3200"/><rect x="1305" y="6" width="1" height="23" fill="#6b3200"/><path d="M381 -1 H387.5 L381 5 Z" fill="#3d2a18"/><path d="M980 -1 H986.2 V5 Z" fill="#3d2a18"/></svg>
<div style="left:576px;top:123px;width:1314px;height:32px;overflow:hidden;"><div style="left:10.3px;top:5.58px;font-size:11.6px;line-height:16px;color:#6b3200;white-space:pre;transform:scaleX(1.0187);transform-origin:0 0;">5:50.000</div><div style="left:110.3px;top:5.58px;font-size:11.6px;line-height:16px;color:#6b3200;white-space:pre;transform:scaleX(1.0187);transform-origin:0 0;">5:55.000</div><div style="left:210.3px;top:5.58px;font-size:11.6px;line-height:16px;color:#6b3200;white-space:pre;transform:scaleX(1.0187);transform-origin:0 0;">6:00.000</div><div style="left:310.3px;top:5.58px;font-size:11.6px;line-height:16px;color:#6b3200;white-space:pre;transform:scaleX(1.0187);transform-origin:0 0;">6:05.000</div><div style="left:410.3px;top:5.58px;font-size:11.6px;line-height:16px;color:#6b3200;white-space:pre;transform:scaleX(1.0187);transform-origin:0 0;">6:10.000</div><div style="left:510.3px;top:5.58px;font-size:11.6px;line-height:16px;color:#6b3200;white-space:pre;transform:scaleX(1.0187);transform-origin:0 0;">6:15.000</div><div style="left:610.3px;top:5.58px;font-size:11.6px;line-height:16px;color:#6b3200;white-space:pre;transform:scaleX(1.0187);transform-origin:0 0;">6:20.000</div><div style="left:710.3px;top:5.58px;font-size:11.6px;line-height:16px;color:#6b3200;white-space:pre;transform:scaleX(1.0187);transform-origin:0 0;">6:25.000</div><div style="left:810.3px;top:5.58px;font-size:11.6px;line-height:16px;color:#6b3200;white-space:pre;transform:scaleX(1.0187);transform-origin:0 0;">6:30.000</div><div style="left:910.3px;top:5.58px;font-size:11.6px;line-height:16px;color:#6b3200;white-space:pre;transform:scaleX(1.0187);transform-origin:0 0;">6:35.000</div><div style="left:1010.3px;top:5.58px;font-size:11.6px;line-height:16px;color:#6b3200;white-space:pre;transform:scaleX(1.0187);transform-origin:0 0;">6:40.000</div><div style="left:1110.3px;top:5.58px;font-size:11.6px;line-height:16px;color:#6b3200;white-space:pre;transform:scaleX(1.0187);transform-origin:0 0;">6:45.000</div><div style="left:1210.3px;top:5.58px;font-size:11.6px;line-height:16px;color:#6b3200;white-space:pre;transform:scaleX(1.0187);transform-origin:0 0;">6:50.000</div><div style="left:1310.3px;top:5.58px;font-size:11.6px;line-height:16px;color:#6b3200;white-space:pre;transform:scaleX(1.0187);transform-origin:0 0;">6:55.000</div></div>
<div style="left:1890px;top:123px;width:22px;height:632px;background:#1a1a1a;"></div>
<div style="left:1902px;top:123px;width:10px;height:649px;background:#1e1e1e;"></div>
<div style="left:472px;top:159px;width:100px;height:100px;background:#333333;"></div>
<div style="left:551px;top:162px;width:18px;height:94px;background:#696969;"></div>
<div style="left:478.70px;top:159.80px;font-size:13px;line-height:18px;color:#e6e6e6;white-space:pre;transform:scaleX(0.7104);transform-origin:0 0;">Marker, Trigger</div>
<div style="left:478.70px;top:179.50px;font-size:13px;line-height:18px;color:#e6e6e6;white-space:pre;transform:scaleX(0.9615);transform-origin:0 0;">6 Objekte</div>
<div style="left:474px;top:239px;width:74px;height:17px;background:#313131;border:1px solid #5a5a5a;border-radius:2px;"></div>
<div style="left:474px;top:239px;width:37px;height:17px;background:#5a5a5a;border-radius:2px 0 0 2px;"></div>
<div style="left:510px;top:240px;width:1px;height:15px;background:#5a5a5a;"></div>
<svg style="left:484px;top:242px" width="17" height="13" viewBox="0 0 17 13"><path d="M0.6 0.4 L8.5 6.5 L0.6 12.6 Z M16.4 0.4 L8.5 6.5 L16.4 12.6 Z" fill="#f7e22a"/></svg>
<svg style="left:522px;top:241px" width="14" height="14" viewBox="0 0 14 14"><circle cx="7" cy="7" r="5.6" fill="none" stroke="#e4e4e4" stroke-width="1.3"/><path d="M3.2 11 L10.8 3" stroke="#e4e4e4" stroke-width="1.3"/></svg>
<div style="left:472px;top:263px;width:100px;height:100px;background:#333333;"></div>
<div style="left:551px;top:266px;width:18px;height:94px;background:#696969;"></div>
<div style="left:478.70px;top:263.80px;font-size:13px;line-height:18px;color:#e6e6e6;white-space:pre;transform:scaleX(0.9256);transform-origin:0 0;">Notizen</div>
<div style="left:478.70px;top:283.50px;font-size:13px;line-height:18px;color:#e6e6e6;white-space:pre;transform:scaleX(0.9615);transform-origin:0 0;">3 Objekte</div>
<div style="left:474px;top:343px;width:74px;height:17px;background:#313131;border:1px solid #5a5a5a;border-radius:2px;"></div>
<div style="left:510px;top:344px;width:1px;height:15px;background:#5a5a5a;"></div>
<svg style="left:484px;top:346px" width="17" height="13" viewBox="0 0 17 13"><path d="M0.6 0.4 L8.5 6.5 L0.6 12.6 Z M16.4 0.4 L8.5 6.5 L16.4 12.6 Z" fill="#e4e4e4"/></svg>
<svg style="left:522px;top:345px" width="14" height="14" viewBox="0 0 14 14"><circle cx="7" cy="7" r="5.6" fill="none" stroke="#e4e4e4" stroke-width="1.3"/><path d="M3.2 11 L10.8 3" stroke="#e4e4e4" stroke-width="1.3"/></svg>
<div style="left:472px;top:367px;width:100px;height:100px;background:#333333;"></div>
<div style="left:551px;top:370px;width:18px;height:94px;background:#696969;"></div>
<div style="left:478.70px;top:367.80px;font-size:13px;line-height:18px;color:#e6e6e6;white-space:pre;transform:scaleX(0.8130);transform-origin:0 0;">Musik</div>
<div style="left:478.70px;top:387.50px;font-size:13px;line-height:18px;color:#e6e6e6;white-space:pre;transform:scaleX(0.9615);transform-origin:0 0;">3 Objekte</div>
<div style="left:474px;top:447px;width:74px;height:17px;background:#313131;border:1px solid #5a5a5a;border-radius:2px;"></div>
<div style="left:510px;top:448px;width:1px;height:15px;background:#5a5a5a;"></div>
<svg style="left:484px;top:450px" width="17" height="13" viewBox="0 0 17 13"><path d="M0.6 0.4 L8.5 6.5 L0.6 12.6 Z M16.4 0.4 L8.5 6.5 L16.4 12.6 Z" fill="#e4e4e4"/></svg>
<svg style="left:522px;top:449px" width="14" height="14" viewBox="0 0 14 14"><circle cx="7" cy="7" r="5.6" fill="none" stroke="#e4e4e4" stroke-width="1.3"/><path d="M3.2 11 L10.8 3" stroke="#e4e4e4" stroke-width="1.3"/></svg>
<div style="left:576px;top:155px;width:1314px;height:312px;background:#262626;"></div>
<div style="left:576px;top:159px;width:1314px;height:100px;background:#303030;"></div>
<div style="left:576px;top:263px;width:1314px;height:100px;background:#303030;"></div>
<div style="left:576px;top:367px;width:1314px;height:100px;background:#303030;"></div>
<div style="left:576px;top:155px;width:1314px;height:1.5px;background:#5e2800;"></div>
<div style="left:1055px;top:162px;width:24px;height:94px;background:#565656;border-right:1px solid #767676;"></div>
<div style="left:1055px;top:240px;width:24px;height:16px;background:#f7d417;"></div>
<div style="left:1058.30px;top:238.74px;font-size:12px;line-height:17px;color:#3a2e00;white-space:pre;transform:scaleX(0.6078);transform-origin:0 0;">Au...</div>
<svg style="left:1057.6px;top:192px" width="19" height="17.8" viewBox="0 0 76 71"><path fill-rule="evenodd" d="M16.3 16 H28.9 L45.8 0.4 V51.3 L28.9 35.3 H16.3 Z M23 22.3 H31.7 L38.7 16 V35.3 L31.7 28.6 H23 Z" fill="#f2f2f2"/><path d="M51.6 13.15 A13.5 13.5 0 0 1 51.6 38.15 Z" fill="#f2f2f2"/><path d="M0.2 44 H15.1 L26.6 64 H49.8 L61.6 44 H75.7 V50.6 H67.5 L54.9 70.7 H21.8 L9.2 50.6 H0.2 Z" fill="#f2f2f2"/></svg>
<div style="left:1267px;top:162px;width:24px;height:94px;background:#565656;border-right:1px solid #767676;"></div>
<div style="left:1267px;top:240px;width:23px;height:16px;background:#484848;"></div>
<div style="left:1270.30px;top:238.74px;font-size:12px;line-height:17px;color:#e0e0e0;white-space:pre;transform:scaleX(0.6078);transform-origin:0 0;">Au...</div>
<svg style="left:1269.6px;top:192px" width="19" height="17.8" viewBox="0 0 76 71"><path fill-rule="evenodd" d="M16.3 16 H28.9 L45.8 0.4 V51.3 L28.9 35.3 H16.3 Z M23 22.3 H31.7 L38.7 16 V35.3 L31.7 28.6 H23 Z" fill="#f2f2f2"/><path d="M51.6 13.15 A13.5 13.5 0 0 1 51.6 38.15 Z" fill="#f2f2f2"/><path d="M0.2 44 H15.1 L26.6 64 H49.8 L61.6 44 H75.7 V50.6 H67.5 L54.9 70.7 H21.8 L9.2 50.6 H0.2 Z" fill="#f2f2f2"/></svg>
<div style="left:1076px;top:266px;width:180px;height:94px;background:#565656;border:1px solid #7a7a7a;border-top-color:#9a9a9a;"></div>
<div style="left:1077px;top:344px;width:178px;height:15px;background:#454545;"></div>
<div style="left:1079.30px;top:268.02px;font-size:11.5px;line-height:16px;color:#dcdcdc;white-space:pre;transform:scaleX(0.7255);transform-origin:0 0;">Und während wir den Sonnenuntergang</div>
<div style="left:1079.30px;top:281.72px;font-size:11.5px;line-height:16px;color:#dcdcdc;white-space:pre;transform:scaleX(0.7537);transform-origin:0 0;">betrachten, klingelten unsere Mobiltelefone...</div>
<div style="left:1077.60px;top:338.92px;font-size:19.5px;line-height:27px;color:#e6e6e6;white-space:pre;font-family:'Liberation Serif',serif;font-weight:bold;">T</div>
<svg style="left:1093.4px;top:344.6px" width="13" height="15" viewBox="0 0 13 15"><path d="M1.2 1 H8 L11.8 4.8 V14 H1.2 Z" fill="none" stroke="#e6e6e6" stroke-width="1.6" stroke-linejoin="round"/><path d="M3.6 7.6 H9.4 M3.6 10.6 H9.4" stroke="#e6e6e6" stroke-width="1.5"/></svg>
<div style="left:1110.70px;top:343.44px;font-size:12.3px;line-height:17px;color:#ececec;white-space:pre;transform:scaleX(0.9816);transform-origin:0 0;">0:09.000</div>
<div style="left:577px;top:370px;width:1313px;height:78px;background:#575757;"></div>
<div style="left:577px;top:409px;width:1313px;height:1px;background:#6a6a6a;"></div>
<div style="left:577px;top:448px;width:1313px;height:16px;background:#484848;"></div>
<svg style="left:0;top:0" width="1920" height="480" viewBox="0 0 1920 480"><g shape-rendering="crispEdges"><path d="M577 390V385.0h1V385.4h1V383.4h1V380.0h1V383.9h1V385.3h1V384.9h1V384.7h1V382.9h1V382.7h1V381.7h1V381.2h1V383.3h1V381.5h1V381.2h1V380.9h1V382.3h1V382.0h1V381.9h1V382.8h1V381.8h1V384.3h1V383.9h1V384.0h1V385.0h1V384.9h1V385.1h1V385.2h1V385.4h1V381.4h1V384.8h1V384.4h1V382.1h1V382.2h1V383.3h1V382.5h1V380.2h1V383.0h1V383.2h1V384.4h1V384.2h1V383.0h1V383.5h1V384.3h1V384.5h1V384.9h1V385.3h1V384.2h1V384.4h1V384.4h1V384.0h1V385.3h1V385.1h1V386.5h1V384.4h1V383.9h1V383.6h1V382.8h1V383.2h1V383.2h1V383.3h1V382.2h1V384.1h1V383.6h1V384.0h1V385.6h1V384.0h1V384.4h1V386.1h1V380.6h1V384.8h1V380.1h1V383.3h1V383.0h1V382.9h1V381.4h1V380.9h1V380.7h1V381.9h1V378.9h1V378.9h1V382.2h1V383.2h1V383.7h1V382.5h1V382.6h1V383.1h1V386.4h1V383.9h1V384.2h1V385.5h1V385.2h1V385.0h1V385.2h1V384.3h1V383.0h1V382.7h1V382.5h1V382.2h1V382.0h1V385.2h1V382.2h1V382.2h1V383.4h1V383.6h1V385.9h1V384.1h1V383.1h1V383.4h1V383.6h1V384.1h1V381.7h1V385.0h1V384.6h1V383.8h1V383.7h1V383.4h1V383.3h1V386.8h1V379.6h1V383.5h1V383.3h1V383.2h1V382.9h1V381.2h1V381.7h1V383.9h1V381.9h1V383.6h1V378.4h1V384.3h1V387.2h1V384.7h1V384.6h1V384.5h1V384.5h1V384.9h1V383.4h1V383.2h1V382.4h1V381.9h1V385.0h1V383.7h1V380.5h1V382.6h1V382.4h1V382.3h1V382.6h1V383.0h1V380.3h1V383.8h1V384.0h1V384.1h1V382.8h1V384.5h1V384.8h1V384.5h1V384.3h1V384.1h1V384.1h1V384.8h1V383.7h1V383.3h1V384.9h1V385.5h1V386.9h1V383.3h1V383.0h1V383.1h1V383.4h1V384.4h1V384.4h1V384.4h1V382.7h1V382.6h1V383.6h1V383.8h1V383.6h1V383.7h1V383.6h1V383.3h1V381.4h1V383.2h1V382.0h1V378.5h1V381.5h1V381.7h1V381.9h1V381.7h1V382.6h1V382.5h1V382.3h1V382.9h1V384.4h1V384.8h1V388.0h1V384.2h1V384.6h1V386.9h1V384.6h1V384.9h1V382.8h1V384.1h1V383.7h1V383.7h1V383.2h1V383.8h1V383.4h1V383.4h1V383.3h1V378.8h1V382.3h1V382.5h1V382.5h1V383.7h1V384.3h1V384.3h1V383.9h1V379.7h1V383.3h1V383.7h1V383.5h1V384.1h1V382.7h1V382.7h1V382.7h1V382.7h1V381.9h1V381.5h1V381.1h1V381.0h1V380.7h1V381.0h1V381.3h1V381.3h1V382.2h1V382.3h1V382.6h1V382.5h1V382.5h1V384.2h1V384.2h1V384.5h1V383.4h1V383.0h1V383.6h1V383.6h1V381.3h1V380.8h1V383.0h1V378.9h1V381.8h1V381.5h1V382.8h1V383.2h1V383.0h1V381.8h1V381.9h1V380.7h1V382.4h1V382.9h1V381.5h1V381.4h1V381.7h1V384.3h1V383.0h1V382.1h1V381.8h1V381.7h1V382.8h1V380.8h1V381.4h1V381.0h1V381.1h1V380.9h1V379.7h1V381.7h1V382.4h1V383.4h1V381.8h1V384.5h1V382.5h1V382.8h1V382.8h1V384.6h1V378.0h1V381.5h1V381.4h1V381.2h1V382.7h1V384.6h1V380.5h1V380.1h1V381.6h1V380.1h1V378.0h1V378.3h1V380.5h1V382.2h1V382.6h1V383.0h1V381.6h1V382.2h1V382.7h1V383.0h1V385.1h1V385.4h1V383.5h1V383.3h1V382.9h1V384.5h1V384.7h1V384.5h1V384.2h1V383.2h1V382.8h1V384.9h1V379.8h1V381.8h1V383.1h1V381.9h1V384.4h1V383.1h1V383.4h1V383.7h1V383.1h1V383.3h1V385.5h1V385.9h1V386.1h1V385.4h1V384.9h1V384.6h1V384.4h1V383.3h1V382.7h1V382.8h1V382.5h1V383.8h1V383.7h1V383.8h1V382.9h1V383.3h1V382.4h1V382.7h1V383.2h1V384.2h1V382.5h1V380.4h1V382.8h1V384.8h1V382.9h1V382.9h1V382.7h1V382.5h1V382.0h1V382.1h1V378.7h1V382.2h1V381.9h1V383.2h1V385.3h1V383.0h1V383.2h1V384.3h1V382.6h1V382.8h1V382.1h1V382.4h1V382.5h1V380.3h1V383.9h1V384.2h1V384.0h1V382.9h1V382.6h1V385.2h1V382.3h1V382.1h1V381.7h1V381.2h1V381.2h1V381.2h1V383.9h1V383.2h1V381.9h1V381.9h1V382.3h1V382.9h1V383.1h1V383.9h1V384.2h1V382.7h1V382.8h1V382.8h1V383.0h1V382.2h1V384.4h1V384.2h1V383.2h1V380.7h1V382.7h1V378.8h1V381.9h1V383.3h1V380.0h1V380.0h1V381.8h1V381.9h1V380.6h1V380.6h1V380.4h1V380.8h1V383.4h1V384.8h1V383.3h1V381.5h1V384.0h1V383.4h1V382.9h1V382.8h1V382.5h1V381.4h1V380.8h1V379.6h1V379.6h1V379.7h1V379.5h1V380.6h1V380.7h1V380.1h1V382.7h1V383.3h1V384.7h1V386.0h1V387.0h1V384.6h1V384.4h1V382.8h1V382.4h1V384.6h1V384.2h1V382.9h1V380.6h1V382.3h1V382.2h1V381.8h1V381.8h1V384.4h1V382.5h1V383.4h1V383.3h1V383.7h1V383.4h1V383.4h1V383.8h1V384.1h1V383.5h1V383.5h1V383.8h1V384.1h1V384.5h1V384.5h1V383.0h1V382.5h1V383.7h1V383.2h1V382.8h1V383.0h1V383.1h1V383.5h1V383.4h1V383.7h1V381.7h1V377.7h1V382.3h1V383.5h1V384.0h1V384.4h1V384.5h1V384.0h1V384.2h1V384.0h1V383.6h1V383.8h1V384.8h1V383.1h1V378.1h1V382.6h1V382.7h1V382.5h1V383.7h1V383.4h1V382.2h1V382.1h1V381.9h1V384.9h1V382.6h1V382.9h1V382.8h1V383.6h1V383.9h1V383.8h1V383.6h1V383.6h1V383.5h1V387.7h1V384.3h1V384.1h1V383.9h1V383.3h1V382.9h1V381.4h1V383.2h1V383.0h1V383.2h1V383.9h1V382.1h1V382.0h1V382.5h1V382.6h1V382.8h1V382.8h1V383.2h1V382.4h1V382.0h1V381.8h1V381.5h1V381.4h1V381.4h1V383.0h1V382.5h1V382.1h1V382.0h1V384.5h1V381.9h1V384.4h1V382.6h1V382.9h1V383.5h1V384.0h1V381.7h1V382.0h1V384.9h1V385.1h1V383.6h1V383.5h1V380.2h1V384.1h1V382.3h1V386.3h1V383.2h1V383.9h1V386.0h1V383.2h1V382.7h1V376.3h1V383.0h1V383.1h1V381.6h1V382.1h1V382.5h1V379.4h1V381.6h1V383.4h1V383.9h1V386.2h1V384.1h1V384.5h1V384.2h1V379.2h1V383.4h1V381.9h1V383.4h1V381.0h1V382.0h1V381.7h1V381.6h1V381.3h1V381.6h1V381.4h1V381.9h1V381.9h1V382.0h1V382.3h1V384.1h1V382.4h1V382.8h1V385.6h1V385.8h1V386.0h1V385.3h1V384.0h1V384.1h1V382.5h1V383.7h1V383.6h1V384.6h1V383.5h1V381.8h1V381.9h1V384.4h1V383.2h1V383.3h1V383.7h1V383.5h1V383.8h1V381.4h1V383.6h1V382.5h1V385.5h1V383.9h1V383.4h1V379.6h1V384.1h1V383.8h1V382.2h1V381.6h1V381.1h1V382.6h1V380.8h1V381.1h1V382.7h1V383.0h1V382.4h1V383.0h1V384.8h1V384.9h1V384.7h1V384.7h1V385.0h1V383.4h1V383.4h1V383.2h1V383.1h1V384.8h1V384.7h1V383.9h1V381.9h1V381.9h1V382.3h1V383.1h1V382.0h1V382.3h1V382.1h1V381.9h1V381.9h1V382.3h1V384.1h1V384.6h1V381.6h1V385.2h1V385.3h1V385.2h1V385.2h1V383.1h1V383.2h1V383.1h1V384.1h1V383.2h1V383.3h1V384.3h1V384.0h1V384.2h1V385.6h1V383.7h1V384.0h1V384.2h1V384.1h1V384.3h1V384.2h1V383.8h1V384.0h1V384.2h1V386.4h1V385.2h1V385.7h1V385.2h1V384.9h1V384.5h1V384.6h1V384.0h1V382.6h1V381.1h1V381.1h1V381.0h1V383.1h1V381.7h1V381.5h1V380.8h1V380.6h1V382.0h1V384.0h1V382.9h1V382.9h1V383.2h1V383.7h1V383.6h1V382.7h1V382.3h1V381.0h1V381.4h1V381.0h1V381.0h1V380.0h1V379.6h1V380.8h1V380.8h1V381.0h1V380.4h1V381.2h1V379.9h1V379.9h1V382.4h1V381.9h1V382.1h1V386.3h1V383.9h1V383.5h1V383.8h1V382.8h1V383.4h1V383.2h1V382.8h1V382.4h1V382.3h1V384.7h1V381.3h1V381.9h1V382.9h1V381.3h1V381.4h1V381.3h1V381.4h1V381.7h1V384.9h1V383.4h1V383.0h1V384.2h1V383.5h1V383.9h1V383.7h1V383.7h1V383.4h1V384.5h1V383.6h1V383.5h1V383.0h1V382.9h1V382.4h1V382.1h1V381.1h1V381.1h1V381.2h1V381.2h1V381.4h1V383.7h1V381.4h1V384.2h1V383.8h1V383.9h1V382.5h1V382.3h1V383.6h1V383.5h1V384.8h1V383.3h1V383.2h1V381.7h1V381.6h1V381.4h1V381.9h1V381.8h1V383.3h1V381.7h1V379.6h1V383.8h1V383.0h1V382.9h1V382.9h1V379.7h1V383.1h1V385.1h1V385.3h1V385.9h1V387.3h1V384.4h1V384.2h1V383.1h1V383.0h1V382.6h1V382.7h1V385.4h1V382.6h1V383.0h1V382.3h1V382.4h1V382.6h1V383.1h1V384.4h1V382.4h1V382.6h1V382.9h1V383.1h1V383.7h1V384.0h1V383.7h1V383.8h1V385.4h1V385.4h1V383.4h1V383.3h1V383.5h1V383.2h1V383.1h1V382.3h1V382.7h1V382.8h1V382.1h1V382.0h1V382.4h1V384.5h1V385.0h1V385.2h1V385.6h1V385.7h1V386.0h1V386.0h1V385.9h1V384.0h1V384.0h1V385.2h1V384.9h1V384.9h1V384.5h1V382.7h1V382.1h1V383.8h1V384.4h1V384.2h1V384.0h1V382.7h1V379.1h1V382.7h1V383.2h1V382.7h1V382.7h1V384.5h1V384.7h1V384.6h1V384.1h1V383.6h1V382.7h1V381.4h1V379.2h1V377.9h1V377.1h1V375.8h1V372.9h1V374.6h1V375.3h1V378.3h1V372.1h1V377.7h1V375.4h1V375.5h1V375.0h1V375.9h1V377.7h1V377.1h1V379.2h1V377.4h1V376.8h1V376.3h1V377.1h1V374.7h1V374.4h1V374.7h1V374.8h1V374.8h1V375.0h1V375.7h1V374.7h1V374.8h1V377.2h1V374.5h1V374.8h1V375.3h1V375.7h1V375.5h1V375.4h1V376.2h1V376.6h1V379.7h1V376.4h1V375.7h1V374.1h1V376.2h1V373.3h1V372.6h1V373.1h1V374.8h1V374.6h1V374.3h1V375.0h1V377.2h1V374.6h1V374.7h1V373.7h1V377.6h1V376.3h1V379.8h1V375.2h1V380.3h1V378.0h1V378.2h1V378.5h1V378.1h1V373.5h1V376.9h1V376.6h1V375.9h1V376.0h1V375.6h1V375.5h1V375.8h1V376.3h1V376.4h1V378.6h1V376.9h1V376.7h1V376.9h1V377.0h1V373.5h1V373.3h1V375.5h1V376.0h1V376.2h1V376.5h1V376.7h1V377.5h1V376.7h1V376.7h1V375.6h1V375.1h1V377.9h1V374.7h1V375.1h1V376.4h1V376.1h1V372.9h1V373.4h1V372.7h1V377.2h1V377.6h1V377.7h1V378.2h1V378.2h1V377.3h1V376.6h1V375.9h1V375.7h1V375.8h1V375.9h1V377.1h1V375.9h1V375.9h1V376.5h1V379.0h1V376.8h1V377.0h1V379.6h1V377.5h1V378.6h1V379.0h1V379.6h1V379.2h1V379.8h1V379.5h1V382.5h1V378.9h1V378.6h1V378.5h1V378.5h1V378.2h1V377.4h1V379.1h1V378.8h1V373.2h1V376.8h1V376.9h1V377.8h1V377.3h1V380.9h1V378.5h1V378.9h1V379.0h1V379.1h1V380.9h1V380.9h1V383.4h1V380.3h1V378.8h1V381.3h1V381.0h1V378.4h1V379.2h1V378.7h1V378.9h1V378.1h1V377.4h1V377.4h1V379.6h1V377.9h1V377.8h1V379.3h1V379.7h1V381.8h1V379.4h1V381.0h1V379.7h1V379.2h1V379.5h1V381.6h1V379.5h1V379.5h1V379.3h1V378.5h1V375.8h1V377.2h1V376.8h1V376.4h1V377.2h1V377.0h1V376.5h1V379.3h1V377.5h1V376.0h1V376.1h1V375.9h1V375.9h1V376.1h1V378.3h1V377.6h1V378.1h1V378.9h1V378.3h1V376.6h1V376.0h1V375.6h1V375.2h1V375.4h1V374.6h1V373.5h1V371.1h1V377.4h1V371.1h1V374.7h1V374.5h1V373.1h1V375.0h1V376.1h1V375.9h1V374.8h1V373.7h1V373.4h1V374.9h1V375.2h1V374.6h1V372.4h1V372.1h1V372.5h1V372.6h1V372.3h1V372.6h1V373.3h1V373.7h1V373.9h1V372.3h1V372.8h1V374.2h1V374.5h1V372.7h1V375.2h1V377.4h1V375.2h1V375.0h1V374.7h1V374.0h1V376.6h1V375.3h1V373.2h1V373.5h1V373.5h1V372.8h1V373.2h1V373.7h1V375.3h1V373.8h1V374.2h1V374.3h1V377.5h1V374.9h1V374.7h1V374.7h1V375.5h1V376.7h1V376.6h1V376.3h1V375.8h1V376.1h1V375.1h1V374.6h1V373.1h1V373.4h1V373.1h1V374.8h1V376.6h1V374.2h1V374.2h1V371.5h1V372.9h1V372.7h1V373.4h1V371.0h1V373.9h1V375.4h1V374.5h1V374.4h1V374.1h1V374.6h1V374.8h1V376.2h1V375.8h1V377.0h1V376.6h1V375.8h1V375.9h1V378.3h1V375.7h1V375.8h1V378.5h1V373.3h1V377.8h1V373.4h1V377.1h1V376.9h1V376.8h1V378.4h1V377.4h1V377.1h1V376.8h1V376.2h1V378.8h1V377.6h1V377.4h1V377.6h1V374.6h1V376.7h1V376.7h1V373.1h1V375.6h1V376.1h1V373.7h1V376.9h1V375.3h1V375.1h1V375.8h1V376.1h1V376.9h1V377.5h1V377.8h1V378.1h1V378.1h1V378.7h1V379.5h1V379.0h1V378.0h1V376.5h1V376.2h1V376.4h1V375.6h1V375.7h1V375.5h1V376.9h1V377.5h1V377.9h1V374.4h1V376.2h1V373.0h1V376.1h1V375.8h1V378.5h1V377.2h1V377.8h1V377.8h1V377.2h1V378.1h1V378.1h1V375.7h1V376.7h1V376.4h1V377.8h1V377.4h1V377.2h1V375.6h1V375.7h1V376.2h1V375.3h1V375.7h1V376.0h1V376.3h1V376.5h1V376.4h1V376.5h1V378.9h1V377.0h1V379.0h1V375.7h1V376.1h1V376.1h1V376.5h1V376.3h1V375.7h1V375.7h1V376.3h1V376.2h1V375.0h1V374.7h1V374.5h1V375.1h1V377.3h1V377.2h1V377.2h1V375.4h1V377.5h1V378.2h1V378.0h1V377.7h1V377.9h1V377.2h1V377.4h1V379.0h1V379.0h1V376.3h1V378.2h1V376.6h1V376.5h1V376.4h1V376.3h1V376.9h1V377.3h1V377.7h1V378.2h1V379.6h1V379.7h1V378.4h1V378.9h1V380.4h1V375.6h1V380.7h1V380.3h1V379.4h1V379.5h1V379.5h1V378.7h1V378.2h1V378.5h1V377.1h1V378.1h1V376.7h1V372.1h1V376.1h1V377.8h1V376.2h1V377.6h1V378.3h1V377.9h1V374.6h1V378.1h1V378.4h1V378.8h1V378.9h1V376.8h1V378.2h1V378.6h1V377.3h1V376.9h1V378.4h1V376.3h1V376.5h1V376.4h1V374.9h1V377.4h1V378.1h1V375.7h1V375.4h1V372.9h1V376.1h1V376.8h1V377.3h1V376.1h1V372.8h1V376.8h1V380.4h1V378.3h1V376.7h1V377.6h1V376.8h1V376.9h1V378.6h1V376.3h1V374.2h1V390M577 390V397.2h1V397.1h1V396.8h1V395.3h1V396.7h1V397.9h1V395.8h1V396.1h1V396.6h1V396.9h1V397.0h1V398.8h1V399.2h1V399.6h1V399.3h1V397.2h1V399.0h1V398.3h1V398.4h1V397.3h1V397.2h1V396.7h1V398.0h1V396.1h1V396.6h1V395.0h1V398.2h1V397.8h1V395.7h1V400.5h1V395.9h1V396.3h1V396.4h1V396.2h1V396.4h1V399.0h1V398.9h1V397.9h1V397.4h1V396.9h1V398.4h1V396.2h1V401.2h1V397.0h1V393.3h1V394.4h1V400.1h1V396.8h1V397.2h1V397.3h1V397.1h1V397.6h1V397.3h1V397.8h1V398.0h1V399.4h1V399.7h1V399.7h1V399.1h1V399.0h1V399.8h1V399.3h1V398.6h1V398.2h1V399.3h1V398.3h1V397.7h1V396.3h1V395.5h1V395.8h1V396.1h1V396.5h1V397.5h1V401.4h1V397.2h1V399.1h1V399.6h1V399.6h1V401.1h1V399.6h1V399.2h1V398.9h1V398.4h1V398.1h1V400.3h1V399.2h1V402.5h1V397.6h1V397.3h1V400.6h1V396.2h1V401.5h1V397.6h1V401.6h1V397.3h1V398.1h1V395.8h1V398.2h1V398.7h1V398.9h1V399.1h1V399.8h1V399.5h1V403.5h1V399.1h1V396.0h1V397.3h1V397.4h1V397.5h1V394.2h1V397.4h1V398.5h1V396.4h1V396.2h1V396.3h1V396.1h1V396.2h1V401.1h1V396.0h1V398.4h1V397.9h1V400.6h1V400.6h1V400.0h1V400.3h1V400.0h1V400.1h1V399.5h1V398.0h1V397.5h1V397.4h1V397.8h1V397.1h1V396.9h1V396.7h1V398.1h1V398.5h1V398.4h1V397.9h1V398.4h1V398.9h1V398.9h1V396.4h1V399.8h1V400.6h1V404.8h1V401.2h1V400.8h1V401.3h1V401.0h1V400.7h1V400.1h1V399.3h1V398.7h1V396.6h1V397.3h1V397.7h1V398.0h1V398.9h1V399.4h1V399.4h1V402.9h1V400.1h1V400.4h1V398.7h1V398.9h1V398.8h1V400.9h1V401.1h1V400.8h1V400.9h1V399.3h1V398.8h1V398.6h1V399.8h1V397.5h1V399.8h1V399.4h1V399.5h1V399.2h1V397.0h1V397.4h1V398.6h1V398.9h1V398.8h1V399.8h1V400.2h1V399.9h1V402.9h1V400.5h1V398.5h1V399.5h1V398.5h1V395.3h1V397.9h1V395.6h1V398.2h1V396.0h1V394.9h1V395.5h1V395.5h1V395.6h1V397.8h1V398.4h1V399.3h1V399.1h1V399.5h1V399.9h1V400.3h1V398.3h1V399.8h1V400.1h1V400.2h1V399.8h1V397.4h1V398.7h1V398.6h1V397.9h1V398.2h1V397.8h1V396.3h1V396.6h1V399.2h1V396.9h1V398.6h1V396.1h1V399.2h1V400.6h1V400.7h1V400.7h1V400.7h1V405.0h1V401.1h1V399.5h1V398.9h1V395.8h1V397.8h1V398.3h1V397.6h1V396.8h1V396.4h1V396.8h1V396.7h1V396.4h1V396.7h1V396.8h1V397.3h1V398.1h1V396.9h1V397.5h1V397.7h1V399.7h1V399.7h1V400.0h1V399.7h1V398.2h1V399.2h1V402.6h1V398.4h1V397.7h1V394.7h1V396.6h1V396.4h1V396.3h1V396.1h1V395.3h1V395.8h1V395.6h1V397.8h1V401.9h1V397.8h1V399.9h1V397.0h1V397.1h1V396.0h1V396.1h1V396.5h1V396.7h1V396.7h1V396.8h1V398.7h1V396.8h1V395.5h1V395.3h1V395.2h1V395.9h1V395.5h1V399.4h1V397.5h1V397.1h1V400.8h1V398.1h1V398.3h1V398.7h1V396.5h1V396.3h1V393.9h1V396.8h1V400.9h1V398.0h1V397.6h1V397.0h1V397.1h1V399.5h1V393.6h1V396.6h1V397.4h1V396.0h1V398.0h1V397.8h1V397.1h1V398.2h1V395.6h1V398.2h1V397.4h1V398.0h1V399.3h1V399.7h1V397.5h1V399.1h1V400.7h1V400.8h1V400.5h1V400.1h1V398.6h1V397.2h1V396.6h1V398.7h1V398.7h1V398.8h1V399.0h1V398.8h1V403.4h1V397.1h1V398.1h1V399.3h1V397.3h1V397.7h1V398.3h1V398.8h1V398.5h1V400.2h1V399.0h1V399.2h1V399.0h1V398.8h1V397.0h1V398.6h1V398.2h1V398.1h1V396.6h1V396.3h1V395.0h1V396.5h1V397.5h1V397.6h1V398.1h1V398.2h1V397.5h1V398.3h1V398.4h1V398.3h1V398.5h1V396.1h1V398.6h1V398.4h1V397.6h1V397.0h1V397.0h1V397.1h1V397.2h1V397.3h1V395.1h1V392.2h1V395.0h1V395.2h1V396.0h1V396.0h1V396.0h1V395.9h1V399.2h1V398.7h1V399.2h1V399.1h1V399.4h1V397.6h1V399.1h1V398.4h1V399.0h1V399.0h1V398.7h1V398.2h1V396.6h1V398.0h1V398.3h1V398.2h1V398.1h1V397.7h1V396.2h1V402.4h1V398.1h1V397.0h1V400.6h1V401.8h1V405.2h1V401.7h1V401.4h1V399.5h1V399.2h1V398.9h1V398.5h1V399.1h1V399.2h1V399.3h1V397.9h1V398.1h1V397.6h1V398.1h1V396.9h1V397.8h1V398.1h1V400.1h1V400.6h1V405.4h1V400.8h1V401.4h1V398.9h1V400.7h1V401.5h1V401.4h1V400.2h1V399.9h1V398.1h1V396.4h1V395.8h1V397.8h1V398.0h1V394.8h1V400.0h1V395.1h1V395.4h1V396.0h1V396.9h1V397.2h1V397.5h1V397.6h1V396.3h1V396.1h1V396.1h1V398.0h1V397.4h1V397.5h1V397.5h1V398.4h1V395.4h1V395.2h1V396.6h1V394.8h1V398.1h1V398.4h1V398.0h1V395.1h1V397.9h1V395.8h1V396.8h1V397.4h1V400.2h1V398.1h1V398.2h1V399.4h1V404.8h1V400.1h1V400.3h1V400.3h1V399.8h1V399.8h1V399.4h1V398.7h1V399.4h1V397.2h1V398.5h1V398.7h1V398.1h1V398.3h1V397.9h1V397.7h1V397.8h1V397.8h1V397.7h1V398.1h1V398.3h1V398.8h1V400.1h1V399.7h1V399.7h1V398.1h1V399.1h1V398.8h1V396.8h1V396.3h1V393.9h1V396.0h1V396.5h1V395.8h1V398.9h1V399.4h1V398.7h1V399.2h1V399.1h1V399.1h1V399.9h1V399.7h1V398.7h1V398.6h1V398.5h1V398.4h1V398.2h1V397.6h1V396.0h1V397.3h1V397.6h1V396.9h1V397.4h1V398.2h1V398.0h1V398.4h1V396.5h1V396.8h1V395.9h1V396.2h1V396.5h1V397.6h1V397.4h1V398.0h1V397.9h1V396.4h1V395.7h1V399.2h1V399.3h1V399.3h1V398.0h1V398.0h1V397.6h1V397.0h1V395.7h1V397.1h1V396.8h1V397.1h1V396.7h1V396.6h1V395.4h1V398.9h1V399.1h1V399.4h1V400.1h1V399.8h1V400.0h1V400.3h1V399.6h1V399.2h1V398.6h1V398.6h1V399.0h1V398.4h1V398.2h1V396.3h1V395.9h1V395.9h1V397.2h1V397.2h1V396.6h1V396.2h1V396.8h1V397.4h1V396.6h1V397.6h1V398.0h1V399.8h1V399.5h1V399.7h1V399.4h1V399.1h1V398.8h1V398.5h1V399.0h1V398.4h1V398.4h1V398.3h1V395.4h1V395.5h1V395.5h1V399.2h1V395.9h1V395.8h1V395.8h1V397.5h1V397.1h1V398.4h1V398.8h1V398.6h1V397.6h1V397.5h1V397.6h1V397.3h1V396.2h1V397.1h1V396.7h1V396.5h1V396.0h1V396.2h1V398.1h1V395.6h1V395.7h1V396.0h1V396.9h1V398.2h1V398.3h1V402.2h1V398.7h1V398.5h1V403.0h1V399.3h1V398.0h1V399.5h1V399.6h1V397.5h1V397.1h1V400.9h1V398.3h1V398.2h1V395.5h1V396.6h1V397.0h1V400.5h1V398.3h1V398.5h1V397.3h1V396.0h1V396.7h1V397.2h1V397.9h1V400.6h1V400.5h1V399.4h1V399.7h1V399.2h1V398.7h1V398.5h1V399.6h1V399.0h1V398.8h1V397.1h1V395.6h1V397.2h1V397.1h1V395.3h1V395.3h1V397.2h1V397.8h1V396.7h1V396.5h1V397.2h1V397.8h1V398.9h1V397.3h1V397.1h1V397.4h1V396.9h1V397.0h1V396.9h1V398.8h1V398.3h1V396.6h1V396.0h1V395.8h1V395.7h1V400.5h1V396.3h1V396.1h1V396.5h1V397.9h1V398.6h1V399.1h1V400.3h1V400.1h1V398.3h1V397.8h1V399.5h1V399.5h1V398.2h1V400.2h1V401.3h1V399.3h1V399.3h1V399.5h1V399.1h1V399.2h1V399.4h1V397.9h1V397.5h1V396.1h1V396.5h1V396.9h1V397.2h1V397.3h1V397.7h1V397.7h1V400.9h1V398.9h1V402.4h1V397.1h1V398.9h1V397.0h1V398.1h1V397.6h1V396.2h1V394.1h1V396.3h1V395.9h1V396.1h1V393.1h1V396.0h1V396.9h1V393.6h1V397.3h1V397.3h1V395.7h1V396.1h1V398.3h1V396.6h1V398.4h1V398.8h1V397.1h1V400.1h1V396.5h1V399.3h1V397.0h1V400.6h1V394.9h1V394.5h1V394.5h1V394.5h1V394.5h1V394.6h1V394.2h1V400.2h1V396.6h1V398.6h1V398.9h1V398.9h1V398.9h1V399.1h1V398.5h1V398.8h1V397.8h1V397.5h1V397.5h1V396.1h1V396.7h1V396.1h1V395.7h1V396.8h1V397.0h1V396.6h1V397.5h1V396.2h1V397.8h1V398.3h1V398.0h1V398.7h1V396.7h1V396.8h1V396.6h1V396.6h1V396.9h1V396.8h1V397.9h1V397.2h1V397.2h1V397.0h1V397.0h1V396.8h1V400.8h1V396.7h1V396.5h1V396.5h1V396.5h1V397.1h1V398.9h1V399.0h1V396.4h1V400.0h1V395.2h1V398.5h1V398.5h1V398.6h1V400.4h1V403.8h1V400.2h1V397.7h1V399.0h1V398.7h1V398.0h1V397.0h1V393.6h1V393.4h1V395.6h1V396.0h1V395.8h1V395.8h1V395.8h1V397.4h1V397.5h1V397.4h1V397.3h1V399.2h1V399.0h1V399.4h1V398.6h1V399.0h1V399.1h1V398.8h1V398.2h1V401.7h1V396.2h1V395.8h1V400.5h1V397.5h1V397.1h1V396.9h1V397.5h1V398.8h1V398.8h1V399.2h1V399.7h1V400.3h1V399.8h1V400.2h1V400.0h1V400.1h1V399.1h1V400.6h1V399.9h1V398.0h1V398.0h1V396.2h1V397.6h1V395.7h1V399.4h1V399.3h1V399.2h1V398.7h1V399.4h1V399.9h1V400.8h1V401.5h1V402.4h1V403.0h1V404.6h1V404.6h1V404.0h1V405.0h1V404.3h1V404.2h1V401.6h1V404.2h1V404.0h1V404.0h1V403.4h1V402.8h1V403.0h1V403.7h1V403.5h1V403.2h1V402.9h1V403.3h1V403.1h1V402.8h1V402.5h1V400.3h1V402.4h1V402.7h1V402.9h1V402.3h1V399.9h1V404.0h1V402.2h1V401.4h1V404.0h1V399.7h1V397.4h1V400.4h1V402.7h1V399.8h1V400.8h1V401.4h1V402.1h1V402.4h1V402.2h1V402.1h1V402.7h1V403.6h1V401.9h1V409.5h1V403.8h1V404.6h1V404.9h1V402.9h1V402.1h1V401.9h1V401.7h1V401.6h1V400.6h1V400.5h1V401.0h1V401.6h1V401.1h1V401.1h1V403.4h1V402.5h1V402.4h1V402.1h1V402.1h1V401.2h1V400.8h1V401.2h1V402.5h1V399.5h1V401.1h1V403.5h1V400.7h1V400.2h1V399.5h1V399.2h1V400.4h1V400.1h1V399.2h1V399.7h1V399.9h1V405.1h1V400.2h1V406.4h1V400.9h1V401.9h1V401.8h1V402.4h1V402.2h1V402.1h1V401.6h1V399.5h1V401.7h1V401.0h1V400.9h1V401.4h1V400.2h1V404.4h1V400.9h1V399.1h1V402.1h1V403.1h1V403.3h1V404.3h1V404.2h1V404.4h1V404.1h1V403.7h1V402.2h1V404.9h1V404.6h1V404.8h1V403.5h1V403.6h1V403.0h1V400.3h1V402.3h1V402.6h1V403.0h1V400.4h1V400.7h1V403.2h1V401.9h1V403.8h1V402.5h1V403.5h1V403.3h1V402.6h1V403.4h1V403.7h1V403.2h1V405.6h1V403.3h1V406.7h1V403.3h1V403.0h1V402.4h1V404.0h1V404.4h1V402.9h1V403.7h1V404.8h1V399.8h1V401.5h1V404.5h1V400.5h1V403.1h1V408.9h1V404.8h1V404.7h1V401.6h1V404.2h1V404.0h1V404.3h1V403.9h1V404.3h1V403.3h1V402.8h1V403.2h1V403.2h1V403.0h1V403.2h1V402.9h1V403.5h1V402.7h1V402.2h1V403.0h1V403.5h1V403.1h1V403.2h1V397.8h1V401.0h1V401.8h1V402.1h1V400.2h1V403.1h1V402.4h1V403.8h1V403.8h1V403.3h1V403.0h1V402.1h1V401.7h1V401.6h1V401.4h1V400.7h1V400.1h1V399.3h1V401.1h1V402.8h1V401.9h1V402.1h1V400.0h1V402.0h1V402.7h1V403.2h1V403.5h1V403.4h1V403.4h1V403.1h1V399.8h1V402.2h1V401.0h1V400.5h1V401.9h1V401.9h1V400.4h1V400.1h1V402.1h1V400.4h1V400.4h1V401.4h1V403.6h1V401.8h1V402.9h1V403.3h1V404.1h1V404.7h1V408.9h1V405.4h1V405.3h1V405.8h1V403.9h1V403.9h1V404.2h1V405.3h1V405.4h1V406.4h1V406.8h1V400.8h1V403.0h1V401.5h1V403.3h1V403.6h1V405.7h1V406.1h1V407.4h1V407.2h1V406.7h1V405.8h1V408.3h1V407.0h1V407.0h1V405.0h1V405.9h1V405.0h1V405.2h1V405.8h1V405.9h1V405.7h1V405.0h1V404.6h1V404.5h1V405.9h1V405.5h1V406.1h1V406.3h1V406.1h1V404.6h1V404.3h1V407.7h1V407.4h1V408.1h1V408.2h1V407.4h1V406.7h1V407.1h1V405.5h1V406.9h1V406.8h1V404.4h1V404.3h1V407.7h1V404.1h1V404.5h1V405.2h1V403.1h1V406.6h1V407.2h1V407.2h1V407.7h1V407.0h1V407.1h1V409.8h1V408.3h1V408.2h1V407.5h1V408.2h1V403.6h1V406.4h1V406.3h1V405.5h1V406.3h1V403.4h1V405.1h1V405.8h1V405.1h1V402.7h1V403.3h1V405.2h1V406.7h1V407.4h1V406.0h1V406.5h1V408.5h1V406.0h1V405.3h1V405.0h1V402.8h1V410.6h1V406.0h1V404.3h1V404.0h1V403.9h1V405.1h1V406.2h1V403.1h1V403.7h1V405.0h1V405.8h1V405.8h1V401.6h1V404.6h1V404.4h1V404.5h1V405.5h1V405.1h1V405.7h1V406.6h1V404.0h1V411.1h1V406.9h1V409.7h1V405.6h1V406.6h1V406.9h1V407.2h1V407.3h1V409.6h1V407.1h1V406.2h1V406.9h1V406.8h1V406.5h1V406.8h1V406.9h1V407.5h1V409.8h1V406.4h1V405.7h1V406.2h1V406.4h1V406.3h1V406.0h1V405.8h1V406.3h1V405.4h1V403.3h1V403.1h1V399.8h1V403.2h1V403.3h1V404.9h1V405.2h1V410.4h1V405.9h1V406.5h1V406.8h1V408.7h1V403.8h1V403.4h1V404.1h1V404.1h1V403.6h1V406.7h1V400.4h1V404.0h1V403.3h1V402.9h1V399.9h1V402.4h1V399.6h1V402.8h1V405.6h1V403.3h1V403.5h1V404.1h1V406.6h1V405.2h1V404.5h1V407.3h1V405.6h1V406.8h1V404.9h1V405.1h1V405.0h1V403.1h1V402.5h1V401.9h1V401.4h1V401.3h1V400.7h1V401.2h1V399.7h1V404.0h1V402.2h1V402.0h1V402.3h1V403.3h1V403.5h1V404.3h1V405.4h1V404.9h1V404.7h1V404.1h1V403.4h1V402.7h1V406.2h1V401.6h1V403.9h1V400.3h1V401.5h1V402.0h1V401.7h1V402.8h1V403.2h1V403.2h1V401.9h1V403.7h1V404.5h1V403.2h1V405.1h1V403.6h1V403.8h1V403.6h1V403.4h1V403.8h1V408.6h1V406.0h1V405.9h1V405.3h1V409.0h1V402.5h1V408.9h1V405.3h1V405.1h1V404.3h1V404.1h1V404.9h1V405.3h1V404.9h1V404.9h1V405.2h1V406.2h1V407.2h1V390Z" fill="#9e9e9e"/><path d="M577 428.5V417.8h1V415.0h1V417.4h1V419.4h1V419.9h1V418.3h1V418.4h1V418.8h1V419.1h1V419.7h1V420.8h1V420.9h1V420.7h1V421.1h1V419.2h1V418.7h1V418.9h1V418.7h1V419.5h1V418.9h1V418.4h1V416.7h1V416.2h1V418.3h1V416.1h1V416.0h1V418.5h1V416.8h1V418.2h1V417.1h1V417.1h1V419.0h1V417.0h1V419.2h1V419.1h1V417.6h1V417.3h1V417.2h1V417.8h1V419.7h1V416.7h1V415.8h1V417.9h1V417.7h1V416.6h1V418.2h1V417.0h1V417.1h1V415.4h1V418.0h1V418.8h1V421.3h1V418.8h1V418.6h1V421.5h1V419.3h1V419.2h1V417.0h1V419.3h1V419.4h1V420.0h1V420.1h1V418.1h1V419.2h1V419.0h1V418.3h1V417.9h1V420.9h1V419.0h1V418.7h1V418.1h1V418.0h1V417.9h1V418.1h1V419.1h1V419.4h1V420.7h1V420.6h1V418.7h1V420.4h1V420.7h1V420.8h1V421.0h1V418.9h1V418.4h1V418.1h1V417.9h1V416.6h1V416.5h1V418.4h1V418.1h1V419.2h1V419.2h1V419.2h1V416.6h1V419.4h1V420.1h1V420.1h1V420.3h1V421.6h1V421.7h1V419.7h1V422.6h1V418.2h1V420.7h1V419.9h1V421.7h1V419.4h1V420.8h1V418.2h1V414.1h1V418.7h1V417.9h1V417.1h1V417.3h1V414.6h1V418.2h1V418.2h1V419.2h1V419.4h1V417.6h1V419.6h1V419.3h1V418.8h1V418.6h1V418.6h1V418.1h1V417.4h1V417.0h1V418.4h1V417.1h1V416.1h1V416.3h1V416.6h1V416.7h1V417.5h1V417.3h1V416.5h1V418.5h1V420.5h1V415.4h1V417.0h1V417.5h1V417.6h1V417.7h1V419.3h1V419.2h1V421.3h1V422.1h1V412.3h1V416.9h1V417.5h1V417.1h1V414.2h1V416.3h1V416.5h1V416.9h1V416.9h1V417.1h1V418.9h1V421.7h1V420.2h1V420.5h1V420.0h1V420.0h1V419.7h1V419.3h1V418.7h1V417.6h1V418.6h1V419.8h1V419.4h1V419.0h1V418.8h1V417.6h1V417.4h1V418.2h1V418.3h1V418.2h1V419.0h1V421.9h1V417.2h1V420.2h1V419.1h1V419.9h1V419.8h1V418.2h1V418.1h1V417.9h1V419.6h1V419.1h1V419.4h1V417.1h1V417.5h1V417.6h1V416.2h1V416.3h1V416.1h1V416.8h1V417.4h1V417.9h1V418.4h1V419.5h1V419.6h1V420.8h1V420.8h1V419.7h1V420.2h1V419.8h1V419.5h1V419.5h1V416.2h1V419.7h1V419.5h1V420.0h1V419.7h1V419.8h1V420.0h1V419.7h1V419.5h1V419.2h1V419.5h1V417.4h1V422.3h1V420.3h1V418.5h1V418.7h1V418.7h1V418.8h1V419.2h1V419.0h1V421.3h1V422.6h1V419.2h1V420.5h1V420.8h1V418.3h1V419.8h1V419.1h1V418.6h1V418.5h1V419.1h1V417.0h1V417.4h1V418.7h1V418.5h1V419.2h1V419.5h1V419.0h1V419.6h1V421.9h1V420.1h1V419.9h1V421.1h1V420.9h1V422.1h1V419.8h1V419.1h1V418.8h1V418.9h1V418.9h1V419.2h1V419.4h1V421.2h1V420.2h1V422.0h1V421.8h1V421.6h1V420.9h1V421.4h1V421.2h1V421.6h1V421.5h1V421.3h1V420.8h1V419.6h1V419.0h1V418.4h1V417.9h1V417.1h1V419.7h1V417.7h1V417.6h1V418.8h1V417.8h1V417.5h1V417.8h1V417.1h1V417.5h1V418.2h1V420.3h1V419.3h1V422.6h1V420.5h1V419.3h1V419.1h1V419.0h1V419.2h1V419.9h1V419.4h1V419.5h1V419.2h1V418.6h1V415.7h1V419.4h1V419.0h1V418.9h1V418.2h1V418.7h1V418.5h1V418.6h1V419.1h1V419.5h1V419.9h1V420.1h1V422.8h1V417.9h1V417.9h1V417.9h1V417.3h1V418.6h1V418.7h1V419.9h1V417.7h1V416.7h1V418.1h1V417.8h1V415.9h1V416.1h1V414.2h1V418.5h1V419.2h1V422.2h1V420.1h1V422.4h1V418.0h1V418.2h1V419.4h1V422.7h1V421.2h1V420.7h1V420.6h1V420.5h1V419.5h1V421.9h1V419.0h1V417.5h1V413.2h1V418.9h1V418.5h1V418.8h1V418.8h1V419.0h1V419.5h1V422.1h1V420.1h1V420.3h1V420.2h1V419.0h1V419.0h1V416.1h1V417.6h1V417.3h1V417.1h1V416.8h1V417.7h1V419.6h1V412.8h1V417.5h1V417.3h1V416.4h1V418.0h1V417.7h1V417.9h1V417.9h1V418.8h1V417.1h1V418.2h1V417.9h1V417.9h1V419.5h1V419.8h1V419.5h1V419.6h1V420.3h1V419.7h1V417.3h1V418.4h1V417.6h1V417.2h1V417.0h1V417.2h1V416.5h1V416.4h1V416.5h1V418.0h1V416.2h1V418.3h1V418.0h1V417.9h1V418.4h1V418.5h1V418.9h1V419.8h1V417.7h1V417.9h1V417.6h1V418.2h1V417.9h1V416.5h1V416.2h1V416.2h1V416.7h1V417.4h1V417.3h1V418.5h1V415.4h1V417.2h1V415.5h1V418.4h1V418.7h1V417.3h1V417.5h1V417.5h1V417.6h1V417.4h1V420.1h1V420.2h1V420.3h1V418.3h1V418.0h1V418.1h1V419.6h1V417.4h1V417.2h1V418.3h1V418.3h1V419.1h1V419.2h1V417.0h1V422.5h1V418.0h1V420.7h1V419.8h1V419.0h1V419.9h1V417.5h1V420.2h1V418.9h1V418.6h1V418.7h1V418.4h1V418.5h1V418.0h1V417.7h1V417.2h1V417.5h1V412.6h1V418.6h1V418.2h1V419.7h1V416.3h1V421.2h1V419.9h1V420.2h1V420.8h1V420.5h1V420.6h1V420.4h1V420.8h1V420.5h1V420.2h1V422.5h1V419.8h1V420.5h1V419.1h1V417.8h1V418.0h1V417.9h1V419.8h1V417.5h1V418.1h1V418.7h1V418.7h1V419.4h1V420.9h1V421.4h1V421.8h1V421.7h1V421.1h1V421.4h1V420.5h1V420.1h1V420.1h1V420.1h1V422.7h1V419.4h1V419.5h1V419.6h1V420.7h1V420.4h1V416.8h1V419.8h1V419.5h1V418.3h1V418.4h1V421.9h1V420.5h1V423.9h1V422.3h1V421.6h1V421.9h1V424.2h1V422.3h1V419.8h1V415.7h1V419.9h1V420.0h1V419.5h1V419.5h1V419.2h1V419.4h1V420.4h1V420.4h1V421.2h1V421.2h1V421.8h1V422.5h1V421.9h1V421.7h1V421.8h1V418.7h1V420.2h1V420.5h1V420.6h1V425.3h1V422.4h1V419.9h1V421.5h1V422.1h1V421.7h1V421.8h1V420.1h1V419.7h1V419.4h1V419.3h1V419.6h1V419.4h1V417.0h1V419.0h1V419.5h1V419.3h1V421.4h1V421.7h1V421.2h1V421.7h1V421.5h1V418.0h1V421.5h1V421.5h1V421.6h1V421.1h1V420.7h1V420.4h1V419.8h1V418.6h1V418.7h1V420.3h1V418.5h1V418.2h1V420.1h1V420.0h1V415.7h1V419.0h1V419.0h1V419.3h1V419.2h1V419.1h1V419.3h1V418.9h1V420.4h1V419.7h1V415.9h1V418.5h1V418.6h1V418.3h1V418.9h1V418.8h1V417.7h1V420.6h1V417.9h1V417.9h1V418.6h1V418.5h1V419.8h1V419.7h1V419.7h1V420.0h1V420.3h1V420.5h1V420.5h1V420.1h1V419.7h1V419.3h1V419.2h1V418.1h1V417.9h1V418.6h1V418.5h1V417.3h1V417.1h1V418.7h1V419.0h1V417.8h1V421.1h1V418.1h1V416.0h1V419.0h1V419.1h1V419.4h1V418.6h1V418.4h1V418.0h1V418.2h1V418.1h1V420.1h1V417.5h1V420.4h1V417.3h1V416.9h1V416.5h1V416.9h1V416.8h1V417.2h1V417.7h1V418.4h1V419.0h1V419.6h1V419.6h1V419.2h1V419.4h1V419.9h1V420.3h1V419.3h1V419.2h1V421.6h1V418.5h1V418.3h1V418.5h1V420.7h1V417.6h1V417.8h1V422.2h1V418.8h1V418.8h1V418.7h1V419.3h1V419.2h1V419.1h1V419.3h1V420.1h1V418.5h1V420.4h1V418.4h1V419.3h1V419.6h1V421.6h1V419.4h1V419.2h1V419.2h1V419.2h1V420.9h1V417.2h1V417.1h1V417.1h1V417.2h1V415.5h1V419.5h1V418.9h1V419.1h1V419.2h1V419.7h1V420.0h1V418.3h1V420.1h1V417.9h1V417.5h1V420.8h1V418.6h1V418.5h1V416.7h1V418.6h1V418.1h1V420.4h1V417.3h1V417.0h1V415.1h1V415.0h1V414.9h1V417.0h1V414.4h1V420.0h1V421.4h1V418.9h1V418.5h1V417.9h1V419.4h1V418.2h1V420.3h1V419.0h1V418.7h1V419.2h1V418.7h1V418.0h1V417.7h1V417.4h1V417.8h1V417.7h1V418.1h1V419.5h1V418.8h1V418.7h1V418.8h1V419.3h1V420.0h1V418.5h1V417.9h1V422.1h1V420.3h1V420.8h1V419.2h1V419.5h1V419.1h1V418.3h1V420.2h1V418.1h1V414.9h1V417.6h1V416.3h1V416.1h1V413.6h1V416.3h1V416.1h1V417.4h1V417.9h1V420.0h1V419.1h1V420.2h1V419.5h1V416.4h1V418.8h1V419.2h1V419.3h1V418.3h1V419.3h1V419.1h1V419.2h1V420.5h1V418.3h1V418.1h1V417.8h1V417.7h1V418.3h1V417.9h1V418.1h1V418.3h1V418.8h1V421.0h1V419.4h1V419.6h1V420.1h1V420.0h1V421.3h1V421.1h1V421.5h1V419.9h1V421.8h1V421.7h1V421.1h1V420.6h1V420.2h1V420.0h1V419.7h1V417.5h1V414.0h1V418.4h1V418.2h1V420.2h1V420.5h1V420.2h1V420.8h1V420.7h1V419.8h1V419.6h1V419.5h1V420.3h1V419.7h1V419.3h1V418.7h1V418.7h1V417.9h1V418.1h1V417.8h1V419.9h1V418.6h1V418.9h1V419.4h1V420.1h1V418.2h1V421.2h1V423.0h1V416.1h1V420.3h1V420.4h1V421.1h1V420.9h1V421.1h1V421.3h1V419.9h1V421.7h1V421.3h1V420.5h1V419.9h1V420.4h1V420.0h1V419.7h1V415.2h1V418.2h1V420.0h1V419.2h1V419.5h1V420.1h1V420.4h1V420.2h1V420.0h1V416.3h1V419.1h1V415.6h1V419.5h1V419.3h1V419.2h1V422.0h1V419.4h1V419.1h1V420.2h1V416.7h1V419.9h1V419.8h1V418.5h1V419.5h1V418.0h1V417.8h1V413.9h1V418.1h1V419.6h1V419.5h1V419.7h1V419.4h1V419.2h1V419.8h1V417.5h1V419.7h1V419.0h1V421.0h1V418.4h1V417.9h1V419.3h1V415.1h1V421.0h1V419.5h1V418.6h1V414.7h1V417.9h1V418.0h1V417.2h1V416.8h1V418.5h1V417.2h1V417.1h1V418.5h1V419.1h1V418.6h1V418.1h1V417.7h1V417.7h1V417.9h1V417.1h1V416.7h1V418.5h1V417.2h1V417.9h1V416.8h1V416.7h1V416.6h1V416.4h1V418.5h1V420.4h1V418.5h1V418.2h1V420.5h1V417.8h1V417.9h1V417.2h1V417.0h1V416.7h1V416.6h1V416.0h1V415.3h1V415.0h1V416.6h1V416.7h1V416.4h1V417.1h1V417.2h1V417.2h1V417.3h1V417.2h1V417.9h1V418.0h1V418.8h1V421.5h1V418.8h1V418.7h1V417.9h1V417.3h1V416.6h1V416.1h1V416.9h1V415.7h1V416.8h1V417.1h1V415.1h1V416.6h1V416.6h1V417.2h1V418.1h1V417.2h1V417.5h1V416.4h1V417.7h1V418.3h1V417.8h1V420.7h1V418.5h1V418.5h1V418.9h1V418.8h1V418.8h1V417.4h1V416.9h1V416.4h1V416.6h1V415.9h1V417.1h1V419.7h1V416.4h1V416.9h1V416.5h1V417.1h1V417.3h1V418.4h1V418.7h1V418.7h1V419.0h1V417.7h1V418.8h1V419.1h1V419.5h1V421.2h1V418.0h1V417.7h1V417.2h1V415.0h1V416.2h1V414.9h1V415.4h1V415.8h1V417.7h1V417.8h1V418.0h1V417.7h1V416.8h1V416.7h1V416.6h1V417.3h1V418.3h1V416.5h1V416.9h1V413.6h1V413.7h1V418.2h1V418.6h1V419.0h1V418.2h1V416.8h1V416.9h1V416.7h1V416.8h1V417.0h1V418.5h1V418.2h1V418.7h1V416.8h1V418.2h1V417.6h1V417.4h1V418.0h1V420.5h1V420.6h1V420.8h1V423.4h1V420.8h1V420.9h1V420.9h1V421.9h1V418.6h1V418.8h1V418.3h1V419.5h1V419.6h1V419.5h1V419.3h1V421.2h1V421.4h1V414.8h1V419.1h1V418.7h1V420.0h1V419.1h1V418.5h1V418.3h1V415.8h1V416.4h1V414.2h1V416.1h1V415.4h1V416.8h1V416.5h1V415.5h1V415.3h1V415.0h1V416.0h1V415.8h1V415.4h1V415.6h1V416.9h1V417.4h1V417.3h1V417.0h1V417.3h1V417.6h1V416.1h1V417.6h1V417.0h1V416.6h1V416.2h1V416.5h1V415.3h1V415.5h1V413.2h1V415.3h1V414.9h1V414.6h1V415.1h1V414.6h1V414.8h1V414.8h1V414.8h1V415.5h1V417.1h1V414.9h1V415.4h1V415.5h1V417.1h1V415.6h1V418.2h1V416.9h1V416.9h1V419.2h1V418.7h1V416.3h1V414.6h1V416.5h1V418.5h1V415.9h1V417.8h1V418.0h1V420.1h1V417.3h1V415.6h1V415.4h1V417.5h1V418.2h1V418.3h1V417.0h1V417.0h1V417.5h1V413.9h1V418.4h1V417.8h1V417.2h1V417.1h1V415.0h1V414.1h1V414.2h1V414.7h1V414.2h1V411.6h1V409.8h1V413.0h1V413.2h1V411.5h1V415.1h1V414.8h1V415.9h1V416.4h1V414.8h1V415.0h1V414.9h1V416.4h1V417.1h1V417.2h1V417.2h1V416.7h1V415.7h1V417.4h1V415.5h1V415.9h1V416.1h1V416.3h1V416.6h1V417.3h1V418.0h1V418.3h1V417.3h1V417.5h1V418.6h1V418.3h1V418.5h1V417.4h1V417.1h1V418.6h1V418.8h1V418.2h1V416.7h1V416.4h1V415.8h1V418.0h1V417.3h1V419.2h1V416.9h1V416.3h1V417.0h1V416.6h1V417.4h1V417.7h1V418.5h1V419.0h1V419.2h1V417.7h1V417.7h1V417.5h1V418.3h1V418.9h1V418.8h1V416.4h1V416.4h1V419.7h1V416.0h1V418.3h1V417.7h1V415.6h1V415.5h1V415.6h1V416.9h1V416.8h1V416.3h1V416.8h1V417.1h1V417.1h1V415.3h1V419.5h1V420.1h1V417.5h1V417.1h1V416.8h1V417.0h1V416.5h1V416.0h1V415.9h1V415.8h1V416.1h1V415.4h1V415.9h1V415.4h1V416.0h1V414.0h1V415.6h1V416.1h1V418.1h1V421.0h1V418.9h1V419.5h1V420.0h1V418.5h1V419.0h1V419.1h1V419.5h1V421.6h1V419.5h1V420.6h1V419.8h1V422.1h1V416.9h1V419.0h1V420.3h1V418.2h1V416.4h1V416.2h1V416.9h1V419.3h1V417.2h1V417.9h1V417.8h1V417.6h1V418.2h1V417.7h1V418.8h1V418.2h1V418.0h1V413.9h1V416.7h1V418.3h1V419.1h1V418.4h1V416.1h1V418.6h1V415.5h1V415.1h1V414.9h1V416.7h1V415.6h1V417.5h1V417.6h1V416.4h1V416.1h1V416.7h1V416.8h1V419.6h1V419.2h1V419.4h1V419.4h1V419.0h1V417.0h1V417.3h1V417.1h1V416.8h1V417.2h1V417.5h1V417.5h1V417.2h1V417.1h1V413.1h1V417.4h1V419.1h1V419.3h1V419.9h1V419.6h1V418.8h1V421.6h1V418.4h1V417.9h1V418.7h1V419.1h1V418.1h1V416.8h1V416.2h1V417.3h1V413.3h1V416.9h1V416.9h1V417.0h1V416.7h1V416.4h1V416.3h1V416.7h1V416.6h1V415.9h1V416.0h1V418.2h1V418.2h1V418.1h1V416.7h1V416.9h1V416.5h1V416.3h1V416.7h1V416.4h1V415.6h1V415.5h1V414.9h1V415.0h1V417.8h1V415.9h1V416.8h1V417.0h1V418.9h1V419.6h1V417.8h1V417.9h1V418.7h1V421.5h1V418.8h1V428.5M577 428.5V440.5h1V440.5h1V440.8h1V440.9h1V443.1h1V440.2h1V438.3h1V439.4h1V437.0h1V436.7h1V437.9h1V437.8h1V438.2h1V438.1h1V438.0h1V438.4h1V439.2h1V439.0h1V439.0h1V439.5h1V440.1h1V439.8h1V441.8h1V439.2h1V439.4h1V439.6h1V438.5h1V437.8h1V437.6h1V437.4h1V436.6h1V436.6h1V436.5h1V436.4h1V435.8h1V435.5h1V436.0h1V437.0h1V437.7h1V438.3h1V439.4h1V438.3h1V438.9h1V440.8h1V441.3h1V441.0h1V440.8h1V443.6h1V441.9h1V440.1h1V439.9h1V439.8h1V439.3h1V439.4h1V437.0h1V436.8h1V437.6h1V436.8h1V438.4h1V438.8h1V438.4h1V435.6h1V439.3h1V439.7h1V438.4h1V436.8h1V438.4h1V441.0h1V442.8h1V439.7h1V438.3h1V438.2h1V438.0h1V436.9h1V433.7h1V436.5h1V438.2h1V435.5h1V438.2h1V441.0h1V438.7h1V437.4h1V437.7h1V438.1h1V437.2h1V437.3h1V438.3h1V438.3h1V438.5h1V438.6h1V437.3h1V437.1h1V438.2h1V438.3h1V437.4h1V436.9h1V436.2h1V436.6h1V439.9h1V435.5h1V435.6h1V435.5h1V435.6h1V437.2h1V437.6h1V435.8h1V437.1h1V439.6h1V440.0h1V440.6h1V440.4h1V438.4h1V438.3h1V438.5h1V439.4h1V436.0h1V437.7h1V440.9h1V442.0h1V438.3h1V437.4h1V437.5h1V439.1h1V438.2h1V439.2h1V437.4h1V438.4h1V442.8h1V440.5h1V440.7h1V440.5h1V439.6h1V439.1h1V440.3h1V438.3h1V437.6h1V435.5h1V436.5h1V434.3h1V436.9h1V437.4h1V437.2h1V437.4h1V442.5h1V438.0h1V438.5h1V437.2h1V437.4h1V437.3h1V437.2h1V437.3h1V439.2h1V435.9h1V437.8h1V437.7h1V439.1h1V439.0h1V436.5h1V436.7h1V434.0h1V438.3h1V437.3h1V436.8h1V437.2h1V437.2h1V437.1h1V436.2h1V436.4h1V438.9h1V439.6h1V440.4h1V440.4h1V438.0h1V437.8h1V439.2h1V439.0h1V439.0h1V439.9h1V440.2h1V438.5h1V438.8h1V438.7h1V436.5h1V438.9h1V439.2h1V439.1h1V437.8h1V438.2h1V436.6h1V438.5h1V439.1h1V438.9h1V438.2h1V438.2h1V438.9h1V438.6h1V439.9h1V440.0h1V439.4h1V439.2h1V439.9h1V439.1h1V438.6h1V438.4h1V437.3h1V436.3h1V435.7h1V436.1h1V436.4h1V437.1h1V438.4h1V439.0h1V439.7h1V439.7h1V438.7h1V439.1h1V438.9h1V438.5h1V438.1h1V437.5h1V437.8h1V437.7h1V437.7h1V440.1h1V437.5h1V438.8h1V438.2h1V437.9h1V436.4h1V437.3h1V437.3h1V436.9h1V438.0h1V437.8h1V438.1h1V438.1h1V438.2h1V438.2h1V438.8h1V440.2h1V444.6h1V441.8h1V441.2h1V440.6h1V439.6h1V438.4h1V438.2h1V438.0h1V437.2h1V439.1h1V438.1h1V438.5h1V438.6h1V437.1h1V437.7h1V437.6h1V440.5h1V440.2h1V440.3h1V439.7h1V440.1h1V437.8h1V438.3h1V439.4h1V439.2h1V438.5h1V437.0h1V436.9h1V435.1h1V436.6h1V436.7h1V437.9h1V438.7h1V440.5h1V437.4h1V437.0h1V437.5h1V438.3h1V438.9h1V438.7h1V439.2h1V437.3h1V437.2h1V437.4h1V437.6h1V440.2h1V440.4h1V439.9h1V440.1h1V440.2h1V440.9h1V440.6h1V440.7h1V438.2h1V440.1h1V440.4h1V440.4h1V440.8h1V438.5h1V440.5h1V440.5h1V439.0h1V439.1h1V439.3h1V439.0h1V438.3h1V440.1h1V436.9h1V439.6h1V439.8h1V439.3h1V439.4h1V436.6h1V435.9h1V435.6h1V435.1h1V437.2h1V439.8h1V437.5h1V438.1h1V435.4h1V436.0h1V436.0h1V437.2h1V437.7h1V439.1h1V438.2h1V438.5h1V440.0h1V440.4h1V438.4h1V439.4h1V439.4h1V438.8h1V437.2h1V437.7h1V437.9h1V437.9h1V440.4h1V439.5h1V439.3h1V439.1h1V438.0h1V440.4h1V438.2h1V438.3h1V437.2h1V440.4h1V442.9h1V439.3h1V439.6h1V439.1h1V439.3h1V438.0h1V438.6h1V438.7h1V436.2h1V437.5h1V437.5h1V437.9h1V438.0h1V436.4h1V437.0h1V437.0h1V438.8h1V439.1h1V439.7h1V438.6h1V445.0h1V437.9h1V441.1h1V440.7h1V440.7h1V440.2h1V438.8h1V438.3h1V435.2h1V436.8h1V436.7h1V437.2h1V441.2h1V442.0h1V437.3h1V437.7h1V437.6h1V437.9h1V437.9h1V437.7h1V441.8h1V439.8h1V438.3h1V438.7h1V438.9h1V438.4h1V439.7h1V438.7h1V438.9h1V439.2h1V439.1h1V438.7h1V438.0h1V440.1h1V435.8h1V437.8h1V437.8h1V437.9h1V437.0h1V438.6h1V438.8h1V438.9h1V439.1h1V440.7h1V437.7h1V438.4h1V439.9h1V438.7h1V436.6h1V436.4h1V436.9h1V436.2h1V436.3h1V436.1h1V436.2h1V436.4h1V436.8h1V436.1h1V438.6h1V438.6h1V437.0h1V437.1h1V438.2h1V439.0h1V438.6h1V438.0h1V437.8h1V437.8h1V438.9h1V435.7h1V440.3h1V443.4h1V437.8h1V437.9h1V437.2h1V436.7h1V436.9h1V438.1h1V438.3h1V438.2h1V438.6h1V441.2h1V439.1h1V440.9h1V441.0h1V441.5h1V446.4h1V440.0h1V440.7h1V441.1h1V441.2h1V441.9h1V441.4h1V438.4h1V437.3h1V440.3h1V440.5h1V442.0h1V438.2h1V439.0h1V438.4h1V438.6h1V439.2h1V442.6h1V438.1h1V443.9h1V444.3h1V441.4h1V440.7h1V440.8h1V440.1h1V439.8h1V440.1h1V439.7h1V440.1h1V437.5h1V436.7h1V438.3h1V434.8h1V437.5h1V436.0h1V436.3h1V436.6h1V437.6h1V437.6h1V437.6h1V438.0h1V439.0h1V440.3h1V440.4h1V439.8h1V439.7h1V441.8h1V439.4h1V437.1h1V437.1h1V437.2h1V436.7h1V436.1h1V436.0h1V437.6h1V437.9h1V438.2h1V438.3h1V438.5h1V438.7h1V438.6h1V439.3h1V439.7h1V440.8h1V438.6h1V439.4h1V439.2h1V437.3h1V439.9h1V437.2h1V435.1h1V437.7h1V442.8h1V438.8h1V437.6h1V437.4h1V436.8h1V436.4h1V436.7h1V436.3h1V437.2h1V437.6h1V437.7h1V438.4h1V438.5h1V438.5h1V438.9h1V439.0h1V439.2h1V437.7h1V437.3h1V438.3h1V438.4h1V436.0h1V440.1h1V439.9h1V439.2h1V437.5h1V435.3h1V437.7h1V437.7h1V437.8h1V437.8h1V438.0h1V442.3h1V439.3h1V440.6h1V441.2h1V440.0h1V439.7h1V440.2h1V440.6h1V440.4h1V444.1h1V440.6h1V440.0h1V438.7h1V439.8h1V444.7h1V437.2h1V439.7h1V440.0h1V437.5h1V436.1h1V437.7h1V440.8h1V438.7h1V439.0h1V443.2h1V441.1h1V441.5h1V441.7h1V441.9h1V442.2h1V441.7h1V442.0h1V439.4h1V440.8h1V438.7h1V438.6h1V439.0h1V438.1h1V439.3h1V438.9h1V439.2h1V440.2h1V439.9h1V438.3h1V438.1h1V438.6h1V441.1h1V441.7h1V442.2h1V440.6h1V440.3h1V441.7h1V442.4h1V440.0h1V440.2h1V441.7h1V444.0h1V440.2h1V439.2h1V439.4h1V438.8h1V437.2h1V437.2h1V438.9h1V435.3h1V438.3h1V438.4h1V439.1h1V437.2h1V437.0h1V438.8h1V439.3h1V440.1h1V440.2h1V437.0h1V438.3h1V436.3h1V438.6h1V438.5h1V437.7h1V437.5h1V435.9h1V437.0h1V436.7h1V438.4h1V438.9h1V439.8h1V440.2h1V440.2h1V438.1h1V438.9h1V438.2h1V439.8h1V440.6h1V441.1h1V440.6h1V440.7h1V444.1h1V438.6h1V439.7h1V439.3h1V438.7h1V436.3h1V435.9h1V435.5h1V435.8h1V436.2h1V436.5h1V438.8h1V439.2h1V442.7h1V439.0h1V439.4h1V438.5h1V438.9h1V439.2h1V438.8h1V443.4h1V438.9h1V438.2h1V438.2h1V437.7h1V438.9h1V438.6h1V438.2h1V436.6h1V436.5h1V436.6h1V436.6h1V436.5h1V436.7h1V436.7h1V439.6h1V437.1h1V437.7h1V438.3h1V439.8h1V437.6h1V436.4h1V440.1h1V440.0h1V437.7h1V437.8h1V437.1h1V436.9h1V436.7h1V433.8h1V436.6h1V438.2h1V438.5h1V437.1h1V437.8h1V438.5h1V436.6h1V436.6h1V436.9h1V437.5h1V439.3h1V439.0h1V436.8h1V435.4h1V436.8h1V433.8h1V436.7h1V436.6h1V437.4h1V436.8h1V436.8h1V435.0h1V434.6h1V434.8h1V436.9h1V437.3h1V437.7h1V441.3h1V436.7h1V437.4h1V437.7h1V438.1h1V437.8h1V437.3h1V436.8h1V436.7h1V438.6h1V437.5h1V437.4h1V439.0h1V435.2h1V437.7h1V437.3h1V438.4h1V437.0h1V437.3h1V436.7h1V437.1h1V441.7h1V437.5h1V443.7h1V439.6h1V443.5h1V437.2h1V442.8h1V438.9h1V438.8h1V438.6h1V440.4h1V439.6h1V437.8h1V438.0h1V439.0h1V439.1h1V438.2h1V438.1h1V439.2h1V437.5h1V437.2h1V437.8h1V437.9h1V442.1h1V438.8h1V443.3h1V441.4h1V440.8h1V441.0h1V441.4h1V441.6h1V441.5h1V441.2h1V441.3h1V441.2h1V440.6h1V439.2h1V439.1h1V438.8h1V438.6h1V437.9h1V438.3h1V438.2h1V438.5h1V439.8h1V439.3h1V439.6h1V438.1h1V438.6h1V436.1h1V438.4h1V438.1h1V439.8h1V438.5h1V437.9h1V438.1h1V437.7h1V434.0h1V436.7h1V437.0h1V440.3h1V436.9h1V436.5h1V435.6h1V436.2h1V440.7h1V436.5h1V438.8h1V438.6h1V439.3h1V437.5h1V437.4h1V437.5h1V437.0h1V437.9h1V437.9h1V437.3h1V437.0h1V436.4h1V435.2h1V435.3h1V434.1h1V436.3h1V437.5h1V437.3h1V435.5h1V436.0h1V434.2h1V436.6h1V437.5h1V437.9h1V438.0h1V439.0h1V439.6h1V439.6h1V438.2h1V437.6h1V438.6h1V438.2h1V439.6h1V439.4h1V439.9h1V437.5h1V440.8h1V435.9h1V440.7h1V439.6h1V439.4h1V440.8h1V439.0h1V440.8h1V443.2h1V443.0h1V441.4h1V438.1h1V441.3h1V439.7h1V441.9h1V441.1h1V440.6h1V440.9h1V439.6h1V439.0h1V440.6h1V439.2h1V438.7h1V439.1h1V441.2h1V440.9h1V438.6h1V440.1h1V441.1h1V441.9h1V446.3h1V442.4h1V442.5h1V442.1h1V442.8h1V442.6h1V440.8h1V441.2h1V442.4h1V441.6h1V441.3h1V441.1h1V439.3h1V438.8h1V438.5h1V438.9h1V440.6h1V440.7h1V436.6h1V440.7h1V438.9h1V441.3h1V442.9h1V443.8h1V443.1h1V443.6h1V442.1h1V442.6h1V444.4h1V444.3h1V442.0h1V441.2h1V442.4h1V441.6h1V440.4h1V440.2h1V440.1h1V440.3h1V439.2h1V438.8h1V438.7h1V438.4h1V438.9h1V440.7h1V440.2h1V440.9h1V440.2h1V440.5h1V442.5h1V442.5h1V441.8h1V441.1h1V441.2h1V440.7h1V438.6h1V438.1h1V438.2h1V438.6h1V438.6h1V438.1h1V439.9h1V440.9h1V439.8h1V439.9h1V439.6h1V442.0h1V442.4h1V442.6h1V443.3h1V443.7h1V441.0h1V442.4h1V442.7h1V440.2h1V440.0h1V439.6h1V440.1h1V436.6h1V441.2h1V439.2h1V439.1h1V439.4h1V439.8h1V439.7h1V440.4h1V440.3h1V438.8h1V439.0h1V437.0h1V439.5h1V440.7h1V439.5h1V440.8h1V440.4h1V440.3h1V440.5h1V442.0h1V442.2h1V440.4h1V440.8h1V442.1h1V441.7h1V440.7h1V441.0h1V439.3h1V439.2h1V441.0h1V444.2h1V441.1h1V440.9h1V438.5h1V441.0h1V444.9h1V440.0h1V440.2h1V436.3h1V441.4h1V440.8h1V444.3h1V438.0h1V437.1h1V434.4h1V437.9h1V439.6h1V438.2h1V438.3h1V440.5h1V441.1h1V440.9h1V442.4h1V442.7h1V443.4h1V444.0h1V444.2h1V442.6h1V444.5h1V444.3h1V444.2h1V441.5h1V443.7h1V443.1h1V442.2h1V445.1h1V435.3h1V438.0h1V438.0h1V438.3h1V440.5h1V440.4h1V438.6h1V439.2h1V441.6h1V441.7h1V442.2h1V442.1h1V442.2h1V442.9h1V443.0h1V442.9h1V442.3h1V441.6h1V439.0h1V439.3h1V437.1h1V439.2h1V438.7h1V436.6h1V440.0h1V438.1h1V437.9h1V438.4h1V439.6h1V439.5h1V439.8h1V439.2h1V438.0h1V437.4h1V439.1h1V438.7h1V438.3h1V438.6h1V439.0h1V440.3h1V439.8h1V436.8h1V439.6h1V437.3h1V437.7h1V437.9h1V438.2h1V438.3h1V438.7h1V438.8h1V443.2h1V440.4h1V442.0h1V439.3h1V439.1h1V441.5h1V441.1h1V440.5h1V439.8h1V439.3h1V439.8h1V439.2h1V437.0h1V438.0h1V441.6h1V438.1h1V438.5h1V440.4h1V440.4h1V440.9h1V440.5h1V440.9h1V442.4h1V440.1h1V441.5h1V441.4h1V442.5h1V442.8h1V443.1h1V447.3h1V441.6h1V441.1h1V441.3h1V440.8h1V440.1h1V440.0h1V442.5h1V441.3h1V440.1h1V436.9h1V440.2h1V440.4h1V444.3h1V442.0h1V442.0h1V442.5h1V444.0h1V443.9h1V443.5h1V442.6h1V442.5h1V442.9h1V441.9h1V443.2h1V440.4h1V438.6h1V439.9h1V440.2h1V440.4h1V437.7h1V442.2h1V441.9h1V441.5h1V441.1h1V440.9h1V439.7h1V440.2h1V439.9h1V440.8h1V441.6h1V439.0h1V441.3h1V440.5h1V440.4h1V440.7h1V439.9h1V440.7h1V440.1h1V440.1h1V437.2h1V440.5h1V440.4h1V440.0h1V440.6h1V440.2h1V436.7h1V438.7h1V439.0h1V438.0h1V439.0h1V439.9h1V439.8h1V441.3h1V441.3h1V440.6h1V440.8h1V441.7h1V444.0h1V445.5h1V440.9h1V440.3h1V439.5h1V439.0h1V438.5h1V440.0h1V440.0h1V439.6h1V438.6h1V438.8h1V440.7h1V440.5h1V441.4h1V442.2h1V443.4h1V442.9h1V442.4h1V442.5h1V441.3h1V441.2h1V442.5h1V441.9h1V442.1h1V444.9h1V441.2h1V442.1h1V438.8h1V440.1h1V442.7h1V441.3h1V441.3h1V443.5h1V443.2h1V443.3h1V441.1h1V440.8h1V444.2h1V444.8h1V444.9h1V441.8h1V442.8h1V441.0h1V440.9h1V441.1h1V441.2h1V443.9h1V443.3h1V443.0h1V442.7h1V440.8h1V439.4h1V439.2h1V439.7h1V439.6h1V440.8h1V441.4h1V441.0h1V441.2h1V440.0h1V440.4h1V441.8h1V441.4h1V441.2h1V441.4h1V439.3h1V440.2h1V440.4h1V444.3h1V438.6h1V445.7h1V444.8h1V440.3h1V441.2h1V441.9h1V440.7h1V442.0h1V442.8h1V442.1h1V442.2h1V442.0h1V442.4h1V444.7h1V442.7h1V442.5h1V441.6h1V440.9h1V442.9h1V440.7h1V441.0h1V442.6h1V442.5h1V446.2h1V441.8h1V441.1h1V442.6h1V442.8h1V443.5h1V443.8h1V444.5h1V444.1h1V444.0h1V443.7h1V444.1h1V443.4h1V442.5h1V442.8h1V443.0h1V442.3h1V440.9h1V438.7h1V439.5h1V439.5h1V438.8h1V441.0h1V441.5h1V441.7h1V442.2h1V440.8h1V440.8h1V445.4h1V441.8h1V441.6h1V440.2h1V443.7h1V440.6h1V444.7h1V444.2h1V444.2h1V440.6h1V442.0h1V441.5h1V440.6h1V440.1h1V439.6h1V439.5h1V428.5Z" fill="#9e9e9e"/></g><rect x="576" y="398" width="1314" height="2" fill="#dcdcdc"/></svg>
<svg style="left:579px;top:450px" width="13" height="12" viewBox="0 0 13 12"><path d="M0.8 4 H3 L6 1.2 V10.8 L3 8 H0.8 Z" fill="none" stroke="#e6e6e6" stroke-width="1.2"/><path d="M8 3.6 A3 3 0 0 1 8 8.4 M9.4 1.4 A5.6 5.6 0 0 1 9.4 10.6" fill="none" stroke="#e6e6e6" stroke-width="1.2"/></svg>
<div style="left:596.30px;top:447.27px;font-size:12.5px;line-height:18px;color:#e6e6e6;white-space:pre;transform:scaleX(0.9604);transform-origin:0 0;">3:28.900 | 05-Dan Ar Braz _ Borders Of Salt</div>
<div style="left:1055px;top:256px;width:1px;height:496px;background:rgba(255,255,255,0.17);"></div>
<div style="left:1267px;top:256px;width:1px;height:496px;background:rgba(255,255,255,0.17);"></div>
<div style="left:1055px;top:159px;width:1px;height:97px;background:#e6d24a;"></div>
<div style="left:1267px;top:159px;width:1px;height:97px;background:#e6d24a;"></div>
<div style="left:976px;top:122px;width:1px;height:630px;background:#bb1c1c;"></div>
<div style="left:474px;top:752px;width:1413px;height:10px;background:#181818;"></div>
<div style="left:928px;top:753px;width:74px;height:8px;background:#595959;border-radius:4px;"></div>
<div style="left:1892px;top:159px;width:10px;height:588px;background:#1a1a1a;"></div>
<div style="left:1893px;top:579px;width:8px;height:55px;background:#686868;border-radius:4px;"></div>
<div style="left:464px;top:780px;width:229px;height:24px;background:#1e1e1e;"></div>
<svg style="left:467.6px;top:785px" width="17" height="14.2" viewBox="0 0 18 15"><path d="M1 13.6 V1 H6.6 L8.2 3 H16.6 V13.6 Z" fill="none" stroke="#e8e8e8" stroke-width="1.3"/></svg>
<svg style="left:491.6px;top:785.6px" width="17" height="14.2" viewBox="0 0 18 15"><path d="M1 12.6 V1 H6 L7.6 3 H14 V5.4" fill="none" stroke="#e8e8e8" stroke-width="1.3"/><path d="M1.2 13.4 L4 5.6 H17 L14.2 13.4 Z" fill="none" stroke="#e8e8e8" stroke-width="1.3" stroke-linejoin="round"/></svg>
<svg style="left:528px;top:785px" width="17" height="15" viewBox="0 0 17 15"><path d="M1.4 8 L5.8 12.6 L15.6 1.6" fill="none" stroke="#6e6e6e" stroke-width="2.4"/></svg>
<svg style="left:553px;top:784px" width="14" height="17" viewBox="0 0 14 17"><path d="M2.2 11 A5 5 0 0 1 7 3.6 M11.8 6 A5 5 0 0 1 7 13.4" fill="none" stroke="#5a5a5a" stroke-width="1.7"/><path d="M6.6 0.6 L10 3.6 L6.6 6.6 Z M7.4 10.4 L4 13.4 L7.4 16.4 Z" fill="#5a5a5a"/></svg>
<svg style="left:600.7px;top:784px" width="16.6" height="16.6" viewBox="0 0 18 18"><path d="M9 18 H18 V9 A9 9 0 0 1 9 18 Z" fill="#e8e8e8"/><circle cx="9" cy="9" r="7.9" fill="#1e1e1e" stroke="#e8e8e8" stroke-width="2"/><path d="M4.4 9 H13.6" stroke="#e8e8e8" stroke-width="2"/></svg>
<svg style="left:624.7px;top:784px" width="16.6" height="16.6" viewBox="0 0 18 18"><path d="M9 18 H18 V9 A9 9 0 0 1 9 18 Z" fill="#8d7d2c"/><circle cx="9" cy="9" r="7.9" fill="#2a2206" stroke="#8d7d2c" stroke-width="2"/><path d="M9 4.6 L10.2 7.7 L13.5 7.9 L10.9 9.9 L11.8 13.1 L9 11.3 L6.2 13.1 L7.1 9.9 L4.5 7.9 L7.8 7.7 Z" fill="#a8942c"/></svg>
<svg style="left:648.7px;top:784px" width="16.6" height="16.6" viewBox="0 0 18 18"><path d="M9 18 H18 V9 A9 9 0 0 1 9 18 Z" fill="#e8e8e8"/><circle cx="9" cy="9" r="7.9" fill="#1e1e1e" stroke="#e8e8e8" stroke-width="2"/><path d="M4.4 9 H13.6 M9 4.4 V13.6" stroke="#e8e8e8" stroke-width="2"/></svg>
<svg style="left:672px;top:784px" width="18" height="16" viewBox="0 0 18 16"><g fill="none" stroke="#f2d531" stroke-width="2"><rect x="1.6" y="1" width="5.6" height="5"/><rect x="10.6" y="1" width="5.6" height="5"/><rect x="1.6" y="10" width="5.6" height="5"/><rect x="10.6" y="10" width="5.6" height="5"/></g></svg>
<div style="left:464px;top:808px;width:226px;height:216px;background:#1e1e1e;"></div>
<div style="left:681px;top:808px;width:9px;height:216px;background:#1a1a1a;"></div>
<div style="left:682px;top:949px;width:6px;height:70px;background:#5c5c5c;border-radius:3px;"></div>
<div style="left:508px;top:1000px;width:173px;height:20px;background:#0a56d6;"></div>
<div style="left:464px;top:808px;width:217px;height:216px;overflow:hidden;">
<div style="left:69.20px;top:-5.93px;font-size:12.5px;line-height:18px;color:#ececec;white-space:pre;transform:scaleX(1.0636);transform-origin:0 0;">Textdateien</div>
<div style="left:48.81px;top:-8.84px;font-size:17px;line-height:24px;color:#e0e0e0;white-space:pre;font-family:'Liberation Serif',serif;font-weight:bold;">T</div>
<div style="left:69.20px;top:14.07px;font-size:12.5px;line-height:18px;color:#ececec;white-space:pre;transform:scaleX(1.0437);transform-origin:0 0;">Animationen (2)</div>
<svg style="left:47px;top:16.4px" width="15" height="12" viewBox="0 0 15 12"><path d="M0.6 1.6 H3 Q5.4 1.6 6.8 5.4 V10.6 M6.8 5.4 Q8.2 2.2 12.4 1.8" fill="none" stroke="#e0e0e0" stroke-width="1.4"/><path d="M10 0 H14 V4 Z" fill="#e0e0e0"/><path d="M4.4 10.6 H9.2" stroke="#e0e0e0" stroke-width="1.3"/></svg>
<div style="left:69.20px;top:34.07px;font-size:12.5px;line-height:18px;color:#ececec;white-space:pre;transform:scaleX(0.9847);transform-origin:0 0;">Kurven</div>
<svg style="left:47px;top:35.8px" width="15" height="13" viewBox="0 0 15 13"><path d="M0.6 5.2 L4.8 1.6 L8.6 4 L14.4 1" fill="none" stroke="#e0e0e0" stroke-width="1.3"/><path d="M0.4 8.4 H14.6 M0.4 11.6 H14.6" stroke="#e0e0e0" stroke-width="1.3"/></svg>
<div style="left:69.20px;top:54.07px;font-size:12.5px;line-height:18px;color:#ececec;white-space:pre;transform:scaleX(1.0803);transform-origin:0 0;">Bildfelder</div>
<svg style="left:47px;top:56.7px" width="15" height="12" viewBox="0 0 15 12"><rect x="0.8" y="0.8" width="13.4" height="10.4" rx="1.4" fill="none" stroke="#e0e0e0" stroke-width="1.5"/><path d="M5.3 0.8 V11.2 M9.7 0.8 V11.2 M0.8 6 H14.2" stroke="#e0e0e0" stroke-width="1.4"/></svg>
<div style="left:89.00px;top:74.07px;font-size:12.5px;line-height:18px;color:#ececec;white-space:pre;transform:scaleX(1.0510);transform-origin:0 0;">Matrix 2x1 (3)</div>
<svg style="left:67px;top:76.7px" width="15" height="12" viewBox="0 0 15 12"><rect x="0.8" y="0.8" width="13.4" height="10.4" rx="1.4" fill="none" stroke="#e0e0e0" stroke-width="1.5"/><path d="M5.3 0.8 V11.2 M9.7 0.8 V11.2 M0.8 6 H14.2" stroke="#e0e0e0" stroke-width="1.4"/></svg>
<div style="left:89.00px;top:94.07px;font-size:12.5px;line-height:18px;color:#ececec;white-space:pre;transform:scaleX(1.0510);transform-origin:0 0;">Matrix 2x2 (4)</div>
<svg style="left:67px;top:96.7px" width="15" height="12" viewBox="0 0 15 12"><rect x="0.8" y="0.8" width="13.4" height="10.4" rx="1.4" fill="none" stroke="#e0e0e0" stroke-width="1.5"/><path d="M5.3 0.8 V11.2 M9.7 0.8 V11.2 M0.8 6 H14.2" stroke="#e0e0e0" stroke-width="1.4"/></svg>
<div style="left:89.00px;top:114.07px;font-size:12.5px;line-height:18px;color:#ececec;white-space:pre;transform:scaleX(0.9809);transform-origin:0 0;">Bildfeld 1920x1080 (1)</div>
<svg style="left:67px;top:116.7px" width="15" height="12" viewBox="0 0 15 12"><rect x="0.8" y="0.8" width="13.4" height="10.4" rx="1.4" fill="none" stroke="#e0e0e0" stroke-width="1.5"/><path d="M5.3 0.8 V11.2 M9.7 0.8 V11.2 M0.8 6 H14.2" stroke="#e0e0e0" stroke-width="1.4"/></svg>
<div style="left:69.20px;top:134.07px;font-size:12.5px;line-height:18px;color:#ececec;white-space:pre;transform:scaleX(1.0760);transform-origin:0 0;">Effekte (1)</div>
<svg style="left:47px;top:135.0px" width="15" height="15" viewBox="0 0 15 15"><path d="M5.4 2.8 L6.8 6.4 L10.4 7.8 L6.8 9.2 L5.4 12.8 L4 9.2 L0.4 7.8 L4 6.4 Z" fill="none" stroke="#e0e0e0" stroke-width="1.2" stroke-linejoin="round"/><path d="M11.6 0.2 L12.3 2.1 L14.2 2.8 L12.3 3.5 L11.6 5.4 L10.9 3.5 L9 2.8 L10.9 2.1 Z M11.6 9.6 L12.3 11.5 L14.2 12.2 L12.3 12.9 L11.6 14.8 L10.9 12.9 L9 12.2 L10.9 11.5 Z" fill="#e0e0e0"/></svg>
<div style="left:69.20px;top:154.07px;font-size:12.5px;line-height:18px;color:#ececec;white-space:pre;transform:scaleX(1.0811);transform-origin:0 0;">Hilfslinien (5)</div>
<svg style="left:47px;top:155.0px" width="15" height="15" viewBox="0 0 15 15"><path d="M4.6 0.4 V14.6 M10.4 0.4 V14.6 M0.2 4.6 H14.8 M0.2 10.4 H14.8" stroke="#e0e0e0" stroke-width="1.7"/></svg>
<div style="left:69.20px;top:174.07px;font-size:12.5px;line-height:18px;color:#ececec;white-space:pre;transform:scaleX(1.0165);transform-origin:0 0;">Color-Grading</div>
<svg style="left:47px;top:175.4px" width="15" height="14" viewBox="0 0 15 14"><path d="M7.4 0.8 C3.4 0.8 0.8 3.6 0.8 7 C0.8 10.6 3.4 13.2 6.4 13.2 C7.8 13.2 8 12.2 7.6 11.4 C7 10.2 7.6 9 9 9 H11.4 C13.2 9 14.2 8 14.2 6.4 C14.2 3.2 11.2 0.8 7.4 0.8 Z" fill="none" stroke="#e0e0e0" stroke-width="1.2"/><circle cx="4" cy="5" r="0.9" fill="#e0e0e0"/><circle cx="7.2" cy="3.4" r="0.9" fill="#e0e0e0"/><circle cx="10.6" cy="4.6" r="0.9" fill="#e0e0e0"/><circle cx="3.6" cy="8.4" r="0.9" fill="#e0e0e0"/></svg>
<div style="left:69.20px;top:194.07px;font-size:12.5px;line-height:18px;color:#ececec;white-space:pre;transform:scaleX(1.0228);transform-origin:0 0;">Trigger (9)</div>
<svg style="left:47px;top:195.0px" width="15" height="15" viewBox="0 0 15 15"><path d="M0.2 13.8 H4.8 V1.2 H8.6" fill="none" stroke="#cfe2ff" stroke-width="1.7"/><path d="M7.4 5.4 L13.6 9.2 L7.4 13 Z" fill="none" stroke="#cfe2ff" stroke-width="1.4"/></svg>
</div>
<svg style="left:494px;top:865px" width="10" height="10" viewBox="0 0 10 10"><path d="M0 0.4 H9.2 L4.6 9.4 Z" fill="#767676"/></svg>
<div style="left:701px;top:780px;width:761px;height:244px;background:#1b1b1b;"></div>
<div style="left:702px;top:782px;width:183px;height:118px;background:#262626;"></div>
<svg style="left:753.5px;top:792px" width="80" height="80" viewBox="0 0 80 80"><path d="M21 0 H52 V11 H32 V80 H0 V68.5 H21 Z" fill="#ffffff"/><path d="M43.5 27.3 L73.4 46 L43.5 64.7 Z" fill="none" stroke="#ffffff" stroke-width="7" stroke-linejoin="miter"/></svg>
<div style="left:724.75px;top:881.90px;font-size:13px;line-height:18px;color:#e8e8e8;white-space:pre;transform:scaleX(0.9466);transform-origin:0 0;">Start Norwegen - Lofoten</div>
<div style="left:889px;top:782px;width:183px;height:118px;background:#262626;"></div>
<svg style="left:940.5px;top:792px" width="80" height="80" viewBox="0 0 80 80"><path d="M21 0 H52 V11 H32 V80 H0 V68.5 H21 Z" fill="#ffffff"/><path d="M43.5 27.3 L73.4 46 L43.5 64.7 Z" fill="none" stroke="#ffffff" stroke-width="7" stroke-linejoin="miter"/></svg>
<div style="left:902.75px;top:881.90px;font-size:13px;line-height:18px;color:#e8e8e8;white-space:pre;transform:scaleX(0.9426);transform-origin:0 0;">Start Großbritannien - Wales</div>
<div style="left:1076px;top:782px;width:183px;height:118px;background:#262626;"></div>
<div style="left:1075.5px;top:781.5px;width:183.5px;height:119px;border:2px solid #f7d835;"></div>
<svg style="left:1129.0px;top:796px" width="76" height="71" viewBox="0 0 76 71"><path fill-rule="evenodd" d="M16.3 16 H28.9 L45.8 0.4 V51.3 L28.9 35.3 H16.3 Z M23 22.3 H31.7 L38.7 16 V35.3 L31.7 28.6 H23 Z" fill="#ffffff"/><path d="M51.6 13.15 A13.5 13.5 0 0 1 51.6 38.15 Z" fill="#ffffff"/><path d="M0.2 44 H15.1 L26.6 64 H49.8 L61.6 44 H75.7 V50.6 H67.5 L54.9 70.7 H21.8 L9.2 50.6 H0.2 Z" fill="#ffffff"/></svg>
<div style="left:1100.25px;top:881.90px;font-size:13px;line-height:18px;color:#e8e8e8;white-space:pre;transform:scaleX(0.9400);transform-origin:0 0;">Audio Ducking aktivieren</div>
<div style="left:1263px;top:782px;width:183px;height:118px;background:#262626;"></div>
<svg style="left:1316.0px;top:796px" width="76" height="71" viewBox="0 0 76 71"><path fill-rule="evenodd" d="M16.3 16 H28.9 L45.8 0.4 V51.3 L28.9 35.3 H16.3 Z M23 22.3 H31.7 L38.7 16 V35.3 L31.7 28.6 H23 Z" fill="#ffffff"/><path d="M51.6 13.15 A13.5 13.5 0 0 1 51.6 38.15 Z" fill="#ffffff"/><path d="M0.2 44 H15.1 L26.6 64 H49.8 L61.6 44 H75.7 V50.6 H67.5 L54.9 70.7 H21.8 L9.2 50.6 H0.2 Z" fill="#ffffff"/></svg>
<div style="left:1280.50px;top:881.90px;font-size:13px;line-height:18px;color:#e8e8e8;white-space:pre;transform:scaleX(0.9394);transform-origin:0 0;">Audio Ducking deaktivieren</div>
<div style="left:702px;top:904px;width:183px;height:118px;background:#262626;"></div>
<svg style="left:753.5px;top:914px" width="80" height="80" viewBox="0 0 80 80"><path d="M21 0 H52 V11 H32 V80 H0 V68.5 H21 Z" fill="#dedede"/><path d="M43.5 27.3 L73.4 46 L43.5 64.7 Z" fill="none" stroke="#dedede" stroke-width="7" stroke-linejoin="miter"/></svg>
<div style="left:750.00px;top:1003.90px;font-size:13px;line-height:18px;color:#e8e8e8;white-space:pre;transform:scaleX(0.9121);transform-origin:0 0;">Sprung zu Outro</div>
<div style="left:889px;top:904px;width:183px;height:118px;background:#262626;"></div>
<div style="left:1076px;top:904px;width:183px;height:118px;background:#262626;"></div>
<div style="left:1263px;top:904px;width:183px;height:118px;background:#262626;"></div>
<div style="left:1449px;top:780px;width:13px;height:244px;background:#1a1a1a;"></div>
<div style="left:1451px;top:863px;width:8px;height:78px;background:#5a5a5a;border-radius:4px;"></div>
<div style="left:1470px;top:780px;width:442px;height:244px;background:#1e1e1e;"></div>
<div style="left:1470px;top:809px;width:442px;height:1px;background:#6a6a6a;"></div>
<div style="left:1470px;top:783px;width:60px;height:27px;background:linear-gradient(#3a3a3a,#2c2c2c);border:1px solid #7d7d7d;border-bottom:none;"></div>
<div style="left:1474.30px;top:785.89px;font-size:13.3px;line-height:19px;color:#ececec;white-space:pre;transform:scaleX(0.9377);transform-origin:0 0;">Vorschau</div>
<div style="left:1531px;top:780px;width:60px;height:30px;background:linear-gradient(#606060,#484848);border:1px solid #8c8c8c;border-bottom:none;"></div>
<div style="left:1549.30px;top:785.89px;font-size:13.3px;line-height:19px;color:#ececec;white-space:pre;transform:scaleX(1.0689);transform-origin:0 0;">Zeit</div>
<div style="left:1592px;top:783px;width:60px;height:27px;background:linear-gradient(#3a3a3a,#2c2c2c);border:1px solid #7d7d7d;border-bottom:none;"></div>
<div style="left:1611.50px;top:785.89px;font-size:13.3px;line-height:19px;color:#ececec;white-space:pre;transform:scaleX(0.9688);transform-origin:0 0;">Log</div>
<div style="right:30.35px;top:818.82px;font-family:'DejaVu Sans Condensed','DejaVu Sans',sans-serif;font-size:53.4px;line-height:69px;color:#f5821e;white-space:pre;transform:scaleX(1.052);transform-origin:100% 0;"><span style="display:inline-block;width:31.27px;text-align:center">6</span><span style="display:inline-block;width:31.27px;text-align:center">:</span><span style="display:inline-block;width:31.27px;text-align:center">0</span><span style="display:inline-block;width:31.27px;text-align:center">9</span><span style="display:inline-block;width:31.27px;text-align:center">.</span><span style="display:inline-block;width:31.27px;text-align:center">7</span><span style="display:inline-block;width:31.27px;text-align:center">5</span><span style="display:inline-block;width:31.27px;text-align:center">0</span></div>
<div style="right:30.35px;top:903.82px;font-family:'DejaVu Sans Condensed','DejaVu Sans',sans-serif;font-size:53.4px;line-height:69px;color:#f7d417;white-space:pre;transform:scaleX(1.052);transform-origin:100% 0;"><span style="display:inline-block;width:31.27px;text-align:center;transform:scale(1.68,1.15)">-</span><span style="display:inline-block;width:31.27px;text-align:center">0</span><span style="display:inline-block;width:31.27px;text-align:center">:</span><span style="display:inline-block;width:31.27px;text-align:center">0</span><span style="display:inline-block;width:31.27px;text-align:center">3</span><span style="display:inline-block;width:31.27px;text-align:center">.</span><span style="display:inline-block;width:31.27px;text-align:center">9</span><span style="display:inline-block;width:31.27px;text-align:center">5</span><span style="display:inline-block;width:31.27px;text-align:center">0</span></div>
<svg style="left:1474.3px;top:915px" width="44.5" height="45" viewBox="0 0 80 80"><path d="M21 0 H52 V11 H32 V80 H0 V68.5 H21 Z" fill="#f7d417"/><path d="M43.5 27.3 L73.4 46 L43.5 64.7 Z" fill="none" stroke="#f7d417" stroke-width="7" stroke-linejoin="miter"/></svg>
<div style="left:0px;top:1024px;width:1920px;height:8px;background:#141414;"></div>
<div style="left:0px;top:1032px;width:1920px;height:48px;background:linear-gradient(90deg,#e5ebf9 0%,#d8e0f4 27%,#dde5f4 50%,#e4ebf5 75%,#e8eff6 100%);"></div>
<svg style="left:795px;top:1045px" width="23" height="23" viewBox="0 0 23 23"><defs><linearGradient id="wg" x1="0" y1="0" x2="1" y2="1"><stop offset="0" stop-color="#5fd0f6"/><stop offset="1" stop-color="#0a78d8"/></linearGradient></defs><g fill="url(#wg)"><rect x="0" y="0" width="11" height="11" rx="0.8"/><rect x="12" y="0" width="11" height="11" rx="0.8"/><rect x="0" y="12" width="11" height="11" rx="0.8"/><rect x="12" y="12" width="11" height="11" rx="0.8"/></g></svg>
<svg style="left:839px;top:1044px" width="24" height="24" viewBox="0 0 24 24"><defs><linearGradient id="tv" x1="0" y1="0" x2="1" y2="1"><stop offset="0" stop-color="#ffffff"/><stop offset="1" stop-color="#b9bcc4"/></linearGradient></defs><rect x="7" y="2" width="16" height="15" rx="2" fill="url(#tv)"/><rect x="1" y="7" width="16" height="15" rx="2" fill="#2b2b2e"/><rect x="1" y="17" width="16" height="5" rx="2" fill="#111"/></svg>
<svg style="left:883px;top:1044px" width="25" height="24" viewBox="0 0 25 24"><path d="M1 4.6 Q1 3 2.6 3 H8 L10.4 5.6 H22 Q23.6 5.6 23.6 7.2 V9 H1 Z" fill="#e9a321"/><rect x="1" y="7" width="23" height="15" rx="1.6" fill="#fcd354"/><path d="M1 16 H24 V20.4 Q24 22 22.4 22 H2.6 Q1 22 1 20.4 Z" fill="#f3b93a"/><rect x="6.4" y="16.4" width="12.4" height="5.6" rx="1" fill="#1b74d0"/><rect x="8.6" y="18.4" width="8" height="1.6" fill="#5fb2f2"/></svg>
<svg style="left:927px;top:1044px" width="25" height="24" viewBox="0 0 25 24"><rect x="8" y="2" width="15" height="12" fill="#1a6fc9"/><rect x="8" y="2" width="7.5" height="6" fill="#0f5db5"/><rect x="15.5" y="2" width="7.5" height="6" fill="#2f95e6"/><rect x="15.5" y="8" width="7.5" height="6" fill="#1d7fd8"/><path d="M8 12 L24 12 V20.6 Q24 22 22.6 22 H9.4 Q8 22 8 20.6 Z" fill="#1c86de"/><path d="M8 12 L16 17.4 L24 12 V14 L16 19.4 L8 14 Z" fill="#5cc0f7"/><rect x="0.6" y="6.4" width="12.6" height="12.6" rx="1.6" fill="#0c64c0"/><circle cx="6.9" cy="12.7" r="3.3" fill="none" stroke="#ffffff" stroke-width="1.7"/></svg>
<svg style="left:970.5px;top:1044px" width="25" height="24" viewBox="0 0 25 24"><defs><linearGradient id="eg1" x1="0" y1="0.2" x2="1" y2="0.1"><stop offset="0" stop-color="#1fa0e6"/><stop offset="0.55" stop-color="#35c6a0"/><stop offset="1" stop-color="#6fd64a"/></linearGradient><linearGradient id="eg2" x1="0.1" y1="0" x2="0.6" y2="1"><stop offset="0" stop-color="#1b8fe2"/><stop offset="1" stop-color="#0b3f94"/></linearGradient></defs><path d="M1.2 11.2 C1.8 4.6 7 0.8 12.6 0.8 C19.4 0.8 24.2 5.8 24.2 11.4 C24.2 15.4 21 17.2 18.2 17.2 C15.6 17.2 14.4 16 14.8 15 C15.6 14.4 16.2 13.4 16.2 12 C16.2 9.2 13.4 7 10 7 C6 7 2 9.6 1.2 11.2 Z" fill="url(#eg1)"/><path d="M1.2 11.2 C0.6 17.8 5.6 23.4 12.4 23.4 C16.6 23.4 20.4 21.2 22.4 17.8 C20 19.4 16.4 19.8 13.6 18.2 C10.2 16.2 9.4 12 11.4 9.4 C10.8 7.8 9.2 7 8 7.2 C4.4 7.6 1.6 9.6 1.2 11.2 Z" fill="url(#eg2)"/></svg>
<svg style="left:1016px;top:1044px" width="23" height="24" viewBox="0 0 23 24"><defs><linearGradient id="pg" x1="0" y1="0" x2="0.3" y2="1"><stop offset="0" stop-color="#2a62d8"/><stop offset="1" stop-color="#2d8fe8"/></linearGradient></defs><rect x="0.6" y="1" width="21.8" height="21.8" rx="3" fill="url(#pg)"/><path d="M0.6 19 L9.4 9 L17.6 18.6 L22.4 13.6 V19.8 Q22.4 22.8 19.4 22.8 H3.6 Q0.6 22.8 0.6 19.8 Z" fill="#5ec3f4"/><path d="M0.6 19.4 L9.4 9 L13.4 13.8 L5.4 22.8 H3.6 Q0.6 22.8 0.6 19.8 Z" fill="#3aa0ea"/><circle cx="16.6" cy="6.4" r="2" fill="#ffffff"/></svg>
<svg style="left:1059px;top:1044px" width="24" height="24" viewBox="0 0 24 24"><rect x="1" y="1" width="22" height="22" rx="4.4" fill="#0a0a0a" stroke="#f2d94a" stroke-width="1.6"/><path d="M7.4 6.8 L16.6 17.2 M16.6 6.8 L7.4 17.2" stroke="#f5d83a" stroke-width="1.9" fill="none"/></svg>
<div style="left:1096px;top:1037px;width:38px;height:38px;background:#f4f6fb;border-radius:4px;border:1px solid #eef1f8;"></div>
<svg style="left:1103px;top:1044px" width="25" height="25" viewBox="0 0 25 25"><rect x="2" y="2" width="10.4" height="10.4" rx="1.6" fill="none" stroke="#c43a1c" stroke-width="1.8" stroke-dasharray="2.6 1.5"/><path d="M13.6 8 V15.4 Q13.6 17 15.2 17 H22.6" fill="none" stroke="#8d949c" stroke-width="1.7"/><path d="M8 13.6 H15 " stroke="#8d949c" stroke-width="1.7"/><circle cx="21.4" cy="14.6" r="1.9" fill="none" stroke="#2f9fd9" stroke-width="1.4"/><circle cx="15.8" cy="21.2" r="1.9" fill="none" stroke="#2f9fd9" stroke-width="1.4"/><path d="M14.2 15.6 L20 15 M14.6 15.4 L15.4 19.6" stroke="#2f9fd9" stroke-width="1.4"/></svg>
<div style="left:892px;top:1072.2px;width:6px;height:3px;background:#858a93;border-radius:1.5px;"></div>
<div style="left:936px;top:1072.2px;width:6px;height:3px;background:#858a93;border-radius:1.5px;"></div>
<div style="left:980px;top:1072.2px;width:6px;height:3px;background:#858a93;border-radius:1.5px;"></div>
<div style="left:1024px;top:1072.2px;width:6px;height:3px;background:#858a93;border-radius:1.5px;"></div>
<div style="left:1068px;top:1072.2px;width:6px;height:3px;background:#858a93;border-radius:1.5px;"></div>
<div style="left:1107px;top:1072.2px;width:16px;height:3px;background:#1668c4;border-radius:1.5px;"></div>
<svg style="left:1571px;top:1050px" width="14" height="10" viewBox="0 0 14 10"><path d="M1 8.2 L7 2 L13 8.2" fill="none" stroke="#1e1e1e" stroke-width="1.3"/></svg>
<svg style="left:1593.5px;top:1046.5px" width="18" height="18" viewBox="0 0 18 18"><path d="M9 0.8 L16.2 4.9 V13.1 L9 17.2 L1.8 13.1 V4.9 Z" fill="#2fd059" stroke="#15803a" stroke-width="1.3"/><path d="M7 5 V13 M7 10.2 L10.6 7.4 M8.2 9.4 L11 13" stroke="#0a4a20" stroke-width="1.5" fill="none"/></svg>
<svg style="left:1617.5px;top:1046.5px" width="18" height="18" viewBox="0 0 18 18"><path d="M9 0.8 L16.2 4.9 V13.1 L9 17.2 L1.8 13.1 V4.9 Z" fill="#b9bcc2" stroke="#33363c" stroke-width="1.4"/><circle cx="9" cy="7.4" r="2.7" fill="none" stroke="#33363c" stroke-width="1.3"/><path d="M9 10 V14" stroke="#33363c" stroke-width="1.5"/></svg>
<svg style="left:1642px;top:1048px" width="16" height="16" viewBox="0 0 16 16"><rect width="16" height="16" fill="#e6198a"/><path d="M4 11.6 A2.6 2.6 0 0 1 4.4 6.6 A3.6 3.6 0 0 1 11.2 6 A2.9 2.9 0 0 1 12 11.6 Z" fill="#ffffff"/><path d="M8 10.6 V7.4 M6.6 8.6 L8 7.2 L9.4 8.6" stroke="#e6198a" stroke-width="1" fill="none"/><circle cx="12.2" cy="12" r="2.2" fill="#7ac943" stroke="#ffffff" stroke-width="0.6"/></svg>
<svg style="left:1665px;top:1049px" width="18" height="13" viewBox="0 0 18 13"><defs><linearGradient id="cg" x1="0" y1="0" x2="0" y2="1"><stop offset="0" stop-color="#6a6e75"/><stop offset="1" stop-color="#d4d7dc"/></linearGradient></defs><path d="M4.4 12 A3.6 3.6 0 0 1 4 4.9 A5 5 0 0 1 13.4 4.6 A3.8 3.8 0 0 1 13.8 12 Z" fill="url(#cg)" stroke="#3c4046" stroke-width="1.1"/></svg>
<svg style="left:1690.5px;top:1048.5px" width="15" height="15" viewBox="0 0 15 15"><circle cx="7.5" cy="7.5" r="7.2" fill="#74c043"/><path d="M3.6 7.8 L6.4 10.6 L11.6 4.8" fill="none" stroke="#ffffff" stroke-width="1.8"/></svg>
<svg style="left:1714px;top:1050px" width="16" height="12" viewBox="0 0 16 12"><path d="M5 10.4 A4.2 4.2 0 0 1 5 1.8 A4.6 4.6 0 0 1 11 1.8 A4.2 4.2 0 0 1 11 10.4 Z" fill="none" stroke="#222" stroke-width="1.5"/><path d="M5.4 4.6 A2 2 0 1 0 7.4 8 L10.4 4.4 A2 2 0 1 1 10.6 7.8" fill="none" stroke="#222" stroke-width="1.3"/></svg>
<svg style="left:1740px;top:1047px" width="15" height="18" viewBox="0 0 15 18"><rect x="2.6" y="0.8" width="5" height="3.6" rx="0.6" fill="none" stroke="#222" stroke-width="1.1"/><rect x="1" y="4.4" width="8.2" height="11.6" rx="1.6" fill="none" stroke="#222" stroke-width="1.2"/><path d="M9.6 13.6 L11.2 15.4 L14 11.8" fill="none" stroke="#222" stroke-width="1.1"/></svg>
<svg style="left:1765px;top:1047px" width="18" height="18" viewBox="0 0 18 18"><path d="M11.4 2 H2.2 Q1 2 1 3.2 V11.4 Q1 12.6 2.2 12.6 H11.4" fill="none" stroke="#222" stroke-width="1.2"/><path d="M6.6 12.6 V16 M3.4 16.2 H10.4" stroke="#222" stroke-width="1.2"/><rect x="12.6" y="1" width="3.6" height="4.4" rx="0.8" fill="none" stroke="#222" stroke-width="1.1"/><path d="M14.4 5.4 V15.6 H11" fill="none" stroke="#222" stroke-width="1.1"/></svg>
<svg style="left:1790px;top:1048px" width="18" height="16" viewBox="0 0 18 16"><path d="M1 5.6 H3.6 L7.2 2.2 V13.8 L3.6 10.4 H1 Z" fill="none" stroke="#222" stroke-width="1.1" stroke-linejoin="round"/><path d="M9.6 5.4 A3.6 3.6 0 0 1 9.6 10.6 M11.8 3.4 A6.4 6.4 0 0 1 11.8 12.6 M14 1.6 A9 9 0 0 1 14 14.4" fill="none" stroke="#222" stroke-width="1.1"/></svg>
<div style="left:1849.60px;top:1040.14px;font-size:12px;line-height:17px;color:#1c1c1c;white-space:pre;transform:scaleX(0.8991);transform-origin:0 0;">14:38</div>
<div style="left:1823.60px;top:1055.94px;font-size:12px;line-height:17px;color:#1c1c1c;white-space:pre;transform:scaleX(0.8825);transform-origin:0 0;">13.10.2024</div>
<div style="left:1883.5px;top:1047.5px;width:17px;height:17px;background:#0f6cbd;border-radius:50%;"></div>
<div style="left:1886.44px;top:1049.13px;font-size:10px;line-height:14px;color:#ffffff;white-space:pre;">17</div>
</body></html>
